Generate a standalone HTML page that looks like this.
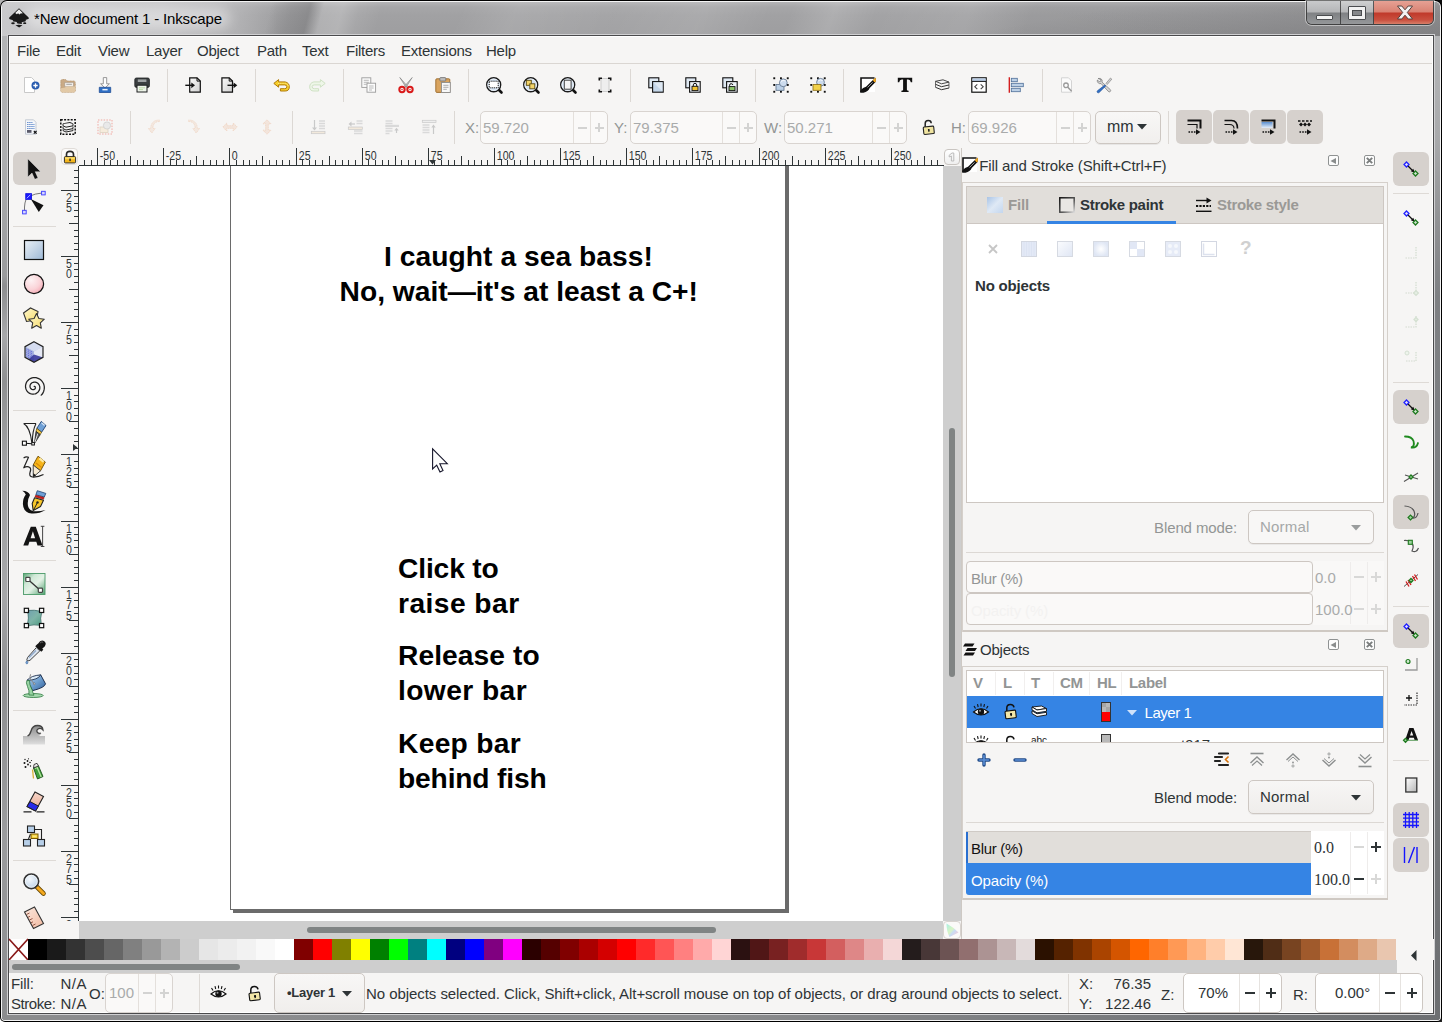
<!DOCTYPE html>
<html><head><meta charset="utf-8"><title>Inkscape</title>
<style>
*{box-sizing:border-box;margin:0;padding:0}
html,body{width:1442px;height:1022px;overflow:hidden;background:#fff}
body{font-family:"Liberation Sans",sans-serif;color:#2e3436;position:relative}
.a{position:absolute}
.t{position:absolute;white-space:nowrap;line-height:1}
svg{position:absolute;overflow:visible}
#content{position:absolute;left:9px;top:36px;width:1424px;height:977px;background:#f6f5f4;border:1px solid #fff}
</style></head><body>

<div class="a" style="left:0;top:0;width:8px;height:8px;background:#b4b4b4"></div><div class="a" style="left:1434px;top:0;width:8px;height:8px;background:#0a0a0a"></div><div class="a" style="left:1434px;top:1014px;width:8px;height:8px;background:#222"></div>
<div class="a" id="frame" style="left:0;top:0;width:1442px;height:1022px;background:#000;border-radius:7px 7px 5px 5px;overflow:hidden">
 <div class="a" style="left:1px;top:1px;width:1440px;height:1020px;background:#f4f4f4;border-radius:6px 6px 4px 4px;overflow:hidden">
  <div class="a" id="glass" style="left:1px;top:1px;width:1438px;height:1018px;border-radius:5px 5px 3px 3px;overflow:hidden;background:#9c9d9f">
   <!-- title gradient -->
   <div class="a" style="left:0;top:0;width:1438px;height:34px;background:linear-gradient(180deg,#b4b4b6 0,#a6a6a8 5px,#a1a1a3 14px,#9e9ea0 33px)"></div>
   <div class="a" style="left:0;top:0;width:1438px;height:34px;background:
    linear-gradient(90deg,rgba(215,215,217,.75) 0,rgba(210,210,212,.7) 160px,rgba(200,200,202,.45) 235px,rgba(200,200,202,0) 275px),
    linear-gradient(104deg,rgba(0,0,0,0) 262px,rgba(60,60,62,.14) 282px,rgba(50,50,52,.2) 300px,rgba(255,255,255,.18) 313px,rgba(255,255,255,.22) 332px,rgba(255,255,255,.08) 348px,rgba(255,255,255,0) 370px),
    linear-gradient(115deg,rgba(255,255,255,0) 420px,rgba(255,255,255,.1) 470px,rgba(255,255,255,.04) 560px,rgba(255,255,255,.1) 640px,rgba(255,255,255,0) 700px),
    linear-gradient(112deg,rgba(255,255,255,0) 735px,rgba(255,255,255,.14) 775px,rgba(255,255,255,.02) 815px,rgba(255,255,255,.08) 900px,rgba(0,0,0,.04) 960px,rgba(0,0,0,.05) 1250px,rgba(0,0,0,.04) 1438px),
    linear-gradient(170deg,rgba(0,0,0,0) 70%,rgba(30,30,32,.18) 100%)"></div>
   <!-- left glass -->
   <div class="a" style="left:0;top:34px;width:5px;height:984px;background:linear-gradient(180deg,#b3b4b6 0,#adaeb0 120px,#9a9b9d 240px,#8d8e90 250px,#a7a8aa 300px,#8f9092 345px,#9fa0a2 420px,#a6a7a9 560px,#8e8f91 640px,#9b9c9e 800px,#8b8c8e 984px)"></div>
   <!-- right glass -->
   <div class="a" style="left:1433px;top:34px;width:5px;height:984px;background:linear-gradient(180deg,#b5b6b8 0,#a9aaac 100px,#8d8e91 200px,#7e8083 260px,#7c7e82 500px,#737578 800px,#6d6f72 984px)"></div>
   <!-- bottom glass -->
   <div class="a" style="left:0;top:1013px;width:1438px;height:5px;background:linear-gradient(90deg,#8b8c8e 0,#8a8b8d 50%,#77797c 80%,#6d6f72 100%)"></div>
  </div>
  <!-- inner light + dark lines around content -->
  <div class="a" style="left:6px;top:33px;width:1428px;height:981px;border:1px solid #d0d0d2"></div>
  <div class="a" style="left:7px;top:34px;width:1426px;height:979px;border:1px solid #4a4a4c"></div>
 </div>
</div>
<!-- title glow + text -->
<div class="a" style="left:26px;top:7px;width:204px;height:22px;border-radius:11px;background:rgba(255,255,255,.38);filter:blur(6px)"></div>
<div class="t" style="left:34px;top:10.500px;font-size:15px;color:#000;letter-spacing:-.15px">*New document 1 - Inkscape</div>
<!-- inkscape logo -->
<svg style="left:8px;top:7px" width="22" height="22" viewBox="0 0 22 22">
  <path d="M11 1.2 L1.3 10.6 Q0.6 11.6 1.8 12.2 L5.2 13.2 Q3.8 14.2 5.6 14.6 L9 15.1 Q8.2 16.3 9.8 16.5 L13.6 16.9 Q14.8 16.2 13.4 15.3 L17.2 14.4 Q18.8 13.8 17.4 12.9 L20.2 12.1 Q21.4 11.5 20.6 10.5 Z" fill="#1a1a1a"/>
  <path d="M11 2.3 L7.2 6.1 L8.9 7.3 L10.1 6.2 L11.3 7.5 L12.6 6.4 L14.9 6.2 Z" fill="#f2f2f2"/>
  <ellipse cx="5" cy="16.3" rx="1.8" ry="1" fill="#1a1a1a"/>
  <ellipse cx="16.7" cy="16.2" rx="1.6" ry=".9" fill="#1a1a1a"/>
  <path d="M7.5 18.2 Q11 17.2 14.5 18.3 Q12.4 19.8 11.2 20.6 Q9.8 19.6 7.5 18.2Z" fill="#1a1a1a"/>
</svg>
<!-- caption buttons -->
<div class="a" style="left:1306px;top:1px;width:128px;height:24px;border-radius:0 0 6px 6px;border:1px solid rgba(40,40,40,.75);border-top:none;box-shadow:0 0 0 1px rgba(255,255,255,.45);overflow:hidden">
  <div class="a" style="left:0;top:0;width:34px;height:25px;background:linear-gradient(180deg,#c9cacc 0,#b4b5b7 11px,#7f8184 12px,#97999b 24px);border-right:1px solid rgba(40,40,40,.7)"></div>
  <div class="a" style="left:34px;top:0;width:33px;height:25px;background:linear-gradient(180deg,#cfd0d1 0,#b6b7b9 11px,#7f8184 12px,#989a9c 24px);border-right:1px solid rgba(40,40,40,.7)"></div>
  <div class="a" style="left:67px;top:0;width:60px;height:25px;background:linear-gradient(180deg,#e6a194 0,#d98273 11px,#c0392a 12px,#c9503f 19px,#dc8a72 24px)"></div>
</div>
<div class="a" style="left:1316px;top:15px;width:17px;height:5px;background:#f4f4f4;border:1px solid #4a4c4f;border-radius:1px"></div>
<div class="a" style="left:1348px;top:6px;width:18px;height:14px;background:#f1f1f1;border:1px solid #4a4c4f;border-radius:1px"></div>
<div class="a" style="left:1352px;top:10px;width:10px;height:6px;background:#85878a;border:1px solid #4a4c4f"></div>
<svg style="left:1396px;top:5px" width="18" height="15" viewBox="0 0 18 15"><path d="M1.5 1 L5.8 1 L9 4.8 L12.2 1 L16.5 1 L11.3 7.5 L16.5 14 L12.2 14 L9 10.2 L5.8 14 L1.5 14 L6.7 7.5 Z" fill="#f3f3f3" stroke="#54403c" stroke-width="1"/></svg>
<div id="content"></div>
<div class="t" style="left:17px;top:43px;font-size:15px;color:#2e3436;letter-spacing:-.25px">File</div><div class="t" style="left:56px;top:43px;font-size:15px;color:#2e3436;letter-spacing:-.25px">Edit</div><div class="t" style="left:98px;top:43px;font-size:15px;color:#2e3436;letter-spacing:-.25px">View</div><div class="t" style="left:146px;top:43px;font-size:15px;color:#2e3436;letter-spacing:-.25px">Layer</div><div class="t" style="left:197px;top:43px;font-size:15px;color:#2e3436;letter-spacing:-.25px">Object</div><div class="t" style="left:257px;top:43px;font-size:15px;color:#2e3436;letter-spacing:-.25px">Path</div><div class="t" style="left:302px;top:43px;font-size:15px;color:#2e3436;letter-spacing:-.25px">Text</div><div class="t" style="left:346px;top:43px;font-size:15px;color:#2e3436;letter-spacing:-.25px">Filters</div><div class="t" style="left:401px;top:43px;font-size:15px;color:#2e3436;letter-spacing:-.25px">Extensions</div><div class="t" style="left:486px;top:43px;font-size:15px;color:#2e3436;letter-spacing:-.25px">Help</div><div class="a" style="left:10px;top:63px;width:1422px;height:1px;background:#dad6d2"></div><svg style="left:24.0px;top:77.0px" width="16" height="16" viewBox="0 0 16 16"><path d="M.5 .5h7l3 3v12h-10z" fill="#fff" stroke="#c9c9c9"/><circle cx="11.5" cy="8.5" r="4" fill="#2a5db0"/><path d="M9.3 8.5h4.4M11.5 6.3v4.4" stroke="#fff" stroke-width="1.3"/></svg><svg style="left:60.0px;top:77.0px" width="16" height="16" viewBox="0 0 16 16"><path d="M.8 4.200q0-1.700 1.600-1.700h3.300l1.300 1.500h6.800q1.500 0 1.500 1.500v8.300q0 1.400-1.500 1.400H2.300q-1.500 0-1.500-1.400z" fill="#c9aa86" stroke="#b4936c" stroke-width=".8" stroke-dasharray="1 .5"/><rect x="4.800" y="5.400" width="8.600" height="4.400" fill="#f1ede8" stroke="#a99b8a" stroke-width=".6"/><path d="M6.300 7.300h5.600" stroke="#9a9a9a" stroke-width=".9"/><path d="M.8 11.200q4-.2 6-1.700h8.500v4.300q0 1.400-1.500 1.400H2.300q-1.500 0-1.500-1.400z" fill="#e2c9a6"/></svg><svg style="left:97.0px;top:77.0px" width="16" height="16" viewBox="0 0 16 16"><path d="M6.300.600h3.400v6.200h2.700L8 11 3.600 6.800h2.700z" fill="#fdfdfd" stroke="#8c8c8c" stroke-width=".9" stroke-linejoin="round"/><path d="M2.300 10.300h11.400v5.200H2.300z" fill="#2f6fc4" stroke="#1f4e96" stroke-width=".8"/><rect x="5.400" y="11.900" width="5.200" height="1.500" fill="#e8f0fa"/></svg><svg style="left:134.0px;top:77.0px" width="16" height="16" viewBox="0 0 16 16"><rect x=".8" y="1" width="14.6" height="9.4" rx="1.6" fill="#3b3f41" stroke="#1c1e1f" stroke-width=".8"/><rect x="3.8" y="2.4" width="8.6" height="2.6" fill="#9ea2a3"/><rect x="3" y="8.2" width="10" height="6.8" fill="#eef3ea" stroke="#1c1e1f" stroke-width="1"/><path d="M5 10.8h6M5 12.6h4" stroke="#b7d8a0" stroke-width=".9"/></svg><svg style="left:185.0px;top:77.0px" width="16" height="16" viewBox="0 0 16 16"><defs><linearGradient id="gi" x1="0" y1="0" x2="1" y2="1"><stop offset="0" stop-color="#fafafa"/><stop offset="1" stop-color="#d0d0d0"/></linearGradient></defs><path d="M4.700.800h7.300l3.300 3.300v11.100H4.700z" fill="url(#gi)" stroke="#111" stroke-width="1.200"/><path d="M12 .800v3.300h3.300" fill="none" stroke="#111" stroke-width="1"/><path d="M.3 8.300h7" stroke="#111" stroke-width="1.400"/><path d="M6.300 5.400L10 8.300 6.300 11.200z" fill="#111"/></svg><svg style="left:221.0px;top:77.0px" width="16" height="16" viewBox="0 0 16 16"><defs><linearGradient id="ge2" x1="0" y1="0" x2="1" y2="1"><stop offset="0" stop-color="#fafafa"/><stop offset="1" stop-color="#d0d0d0"/></linearGradient></defs><path d="M.900.800h7.300l3.300 3.300v11.100H.900z" fill="url(#ge2)" stroke="#111" stroke-width="1.200"/><path d="M8.200.800v3.300h3.300" fill="none" stroke="#111" stroke-width="1"/><path d="M6.500 8.300h7" stroke="#111" stroke-width="1.400"/><path d="M12.600 5.400L16.300 8.300 12.600 11.200z" fill="#111"/></svg><svg style="left:273.0px;top:77.0px" width="16" height="16" viewBox="0 0 16 16"><path d="M5.600 2.600L.800 6.400l4.800 3.800V7.900h6.100q2.200 0 2.200 1.900t-2.200 1.900H7.400v2.300h4.700q4.200 0 4.200-4.100T12.100 4.900H5.600z" fill="#f8cf2a" stroke="#b07a08" stroke-width="1" stroke-linejoin="round"/><path d="M5 6.400h7.500q2.800.3 2.800 3.400" fill="none" stroke="#fff2a8" stroke-width=".8" stroke-dasharray="1 .8"/></svg><svg style="left:310.0px;top:77.0px" width="16" height="16" viewBox="0 0 16 16"><path d="M10.400 2.600l4.800 3.800-4.800 3.800V7.900H4.300q-2.200 0-2.200 1.900t2.200 1.900h4.300v2.300H3.900q-4.200 0-4.200-4.100T3.900 4.900h6.500z" fill="#eef6e8" stroke="#cfe2c4" stroke-width="1" stroke-linejoin="round"/></svg><svg style="left:360.0px;top:77.0px" width="16" height="16" viewBox="0 0 16 16"><rect x="1.800" y=".8" width="9" height="9.600" fill="#fafafa" stroke="#9c9c9c" stroke-width=".9"/><path d="M3.800 3.300h5M3.800 5.300h5M3.800 7.300h3" stroke="#aaa" stroke-width=".8"/><rect x="7" y="6.200" width="8.600" height="9" fill="#fcfcfc" stroke="#9c9c9c" stroke-width=".9"/><path d="M9 9h4.600M9 11h4.600M9 13h3" stroke="#aaa" stroke-width=".8"/></svg><svg style="left:398.0px;top:77.0px" width="16" height="16" viewBox="0 0 16 16"><path d="M1.800.500L9.400 9.200 8 10.300zM14.200.500L6.600 9.200 8 10.300z" fill="#c8c8c8" stroke="#7a7a7a" stroke-width=".6"/><circle cx="4" cy="12.500" r="2.700" fill="none" stroke="#d91a1a" stroke-width="2"/><circle cx="12" cy="12.500" r="2.700" fill="none" stroke="#d91a1a" stroke-width="2"/><circle cx="4" cy="12.500" r=".7" fill="#d91a1a"/><circle cx="12" cy="12.500" r=".7" fill="#d91a1a"/></svg><svg style="left:435.0px;top:77.0px" width="16" height="16" viewBox="0 0 16 16"><rect x=".8" y="1.800" width="14" height="13.600" rx="1" fill="#d9a45f" stroke="#9a6a2a" stroke-width=".9"/><rect x="4.800" y=".6" width="6" height="3.400" rx=".8" fill="#bdbdbd" stroke="#6f6f6f" stroke-width=".8"/><rect x="6.500" y="5.500" width="8.800" height="10" fill="#f8f8f8" stroke="#8d8d8d" stroke-width=".9"/><path d="M8.300 8.300h5.200M8.300 10.300h5.200M8.300 12.300h3.500" stroke="#9a9a9a" stroke-width=".8"/></svg><svg style="left:486.0px;top:77.0px" width="16" height="16" viewBox="0 0 16 16"><path d="M12.500 12.500l3 3" stroke="#111" stroke-width="2.600" stroke-linecap="round"/><circle cx="7.700" cy="7.700" r="7" fill="#d5e3f2" stroke="#1a1a1a" stroke-width="1.400"/><circle cx="7.700" cy="7.700" r="5.800" fill="none" stroke="#f2f6fb" stroke-width=".8"/><rect x="3.200" y="4.200" width="9" height="6.600" fill="#fff" stroke="#111" stroke-width="1" stroke-dasharray="1.200 .9"/></svg><svg style="left:523.0px;top:77.0px" width="16" height="16" viewBox="0 0 16 16"><path d="M12.500 12.500l3 3" stroke="#111" stroke-width="2.600" stroke-linecap="round"/><circle cx="7.700" cy="7.700" r="7" fill="#d5e3f2" stroke="#1a1a1a" stroke-width="1.400"/><circle cx="7.700" cy="7.700" r="5.800" fill="none" stroke="#f2f6fb" stroke-width=".8"/><rect x="3.300" y="3.300" width="5" height="5" fill="#f3d46a" stroke="#5a4a10" stroke-width=".9"/><rect x="6.800" y="6.800" width="5" height="5" fill="#f3d46a" stroke="#5a4a10" stroke-width=".9"/></svg><svg style="left:560.0px;top:77.0px" width="16" height="16" viewBox="0 0 16 16"><path d="M12.500 12.500l3 3" stroke="#111" stroke-width="2.600" stroke-linecap="round"/><circle cx="7.700" cy="7.700" r="7" fill="#d5e3f2" stroke="#1a1a1a" stroke-width="1.400"/><circle cx="7.700" cy="7.700" r="5.800" fill="none" stroke="#f2f6fb" stroke-width=".8"/><rect x="4.300" y="3.200" width="6.800" height="9" fill="#f4f4f4" stroke="#444" stroke-width="1"/></svg><svg style="left:597.0px;top:77.0px" width="16" height="16" viewBox="0 0 16 16"><rect x="4" y="1.500" width="8" height="13" fill="#eeeeee" stroke="#c4c4c4" stroke-width=".8"/><path d="M2.300 3.500V1.300h2.700M11 1.300h2.700V3.500M13.700 12.500v2.200H11M5 14.700H2.300V12.500" fill="none" stroke="#111" stroke-width="1.600"/></svg><svg style="left:648.0px;top:77.0px" width="16" height="16" viewBox="0 0 16 16"><rect x=".8" y=".8" width="10" height="10" fill="#dfe9f3" stroke="#111" stroke-width="1.100"/><rect x="4.600" y="4.600" width="10.600" height="10.600" fill="#c5d7ea" stroke="#111" stroke-width="1.100"/><path d="M5.200 5.200h9.400v9.400z" fill="#e8eff7" opacity=".7"/></svg><svg style="left:685.0px;top:77.0px" width="16" height="16" viewBox="0 0 16 16"><rect x=".8" y=".8" width="10" height="10" fill="#dfe9f3" stroke="#111" stroke-width="1.100"/><rect x="4.600" y="4.600" width="10.600" height="10.600" fill="#eef3f8" stroke="#111" stroke-width="1.100"/><rect x="7" y="9.300" width="6" height="4.300" fill="#f2c230" stroke="#111" stroke-width=".9"/><path d="M8.300 9.300V7.900q0-1.500 1.700-1.500t1.700 1.500v1.400" fill="none" stroke="#111" stroke-width="1"/></svg><svg style="left:722.0px;top:77.0px" width="16" height="16" viewBox="0 0 16 16"><rect x=".8" y=".8" width="10" height="10" fill="#dfe9f3" stroke="#111" stroke-width="1.100"/><rect x="4.600" y="4.600" width="10.600" height="10.600" fill="#eef3f8" stroke="#111" stroke-width="1.100"/><rect x="7" y="9.600" width="6" height="4" fill="#8cc56a" stroke="#111" stroke-width=".9"/><path d="M7.600 9.600V8.200q0-1.500 1.600-1.500t1.600 1.300" fill="none" stroke="#111" stroke-width="1"/></svg><svg style="left:773.0px;top:77.0px" width="16" height="16" viewBox="0 0 16 16"><rect x="0.3" y="0.3" width="1.900" height="1.900" fill="#111"/><rect x="13.8" y="0.3" width="1.900" height="1.900" fill="#111"/><rect x="0.3" y="13.8" width="1.900" height="1.900" fill="#111"/><rect x="13.8" y="13.8" width="1.900" height="1.900" fill="#111"/><rect x="7" y="0.3" width="1.900" height="1.900" fill="#111"/><rect x="7" y="13.8" width="1.900" height="1.900" fill="#111"/><rect x="0.3" y="7" width="1.900" height="1.900" fill="#111"/><rect x="13.8" y="7" width="1.900" height="1.900" fill="#111"/><rect x="3" y="7.500" width="8" height="5.800" fill="#bcd0e6" stroke="#5a6f88" stroke-width=".8"/><circle cx="10.300" cy="5.800" r="3.900" fill="#cddcee" stroke="#5a6f88" stroke-width=".8"/><path d="M8 4.500q2-2 4.500-.5" fill="none" stroke="#fff" stroke-width=".8"/></svg><svg style="left:810.0px;top:77.0px" width="16" height="16" viewBox="0 0 16 16"><rect x="0.3" y="0.3" width="1.900" height="1.900" fill="#111"/><rect x="13.8" y="0.3" width="1.900" height="1.900" fill="#111"/><rect x="0.3" y="13.8" width="1.900" height="1.900" fill="#111"/><rect x="13.8" y="13.8" width="1.900" height="1.900" fill="#111"/><rect x="7" y="0.3" width="1.900" height="1.900" fill="#111"/><rect x="7" y="13.8" width="1.900" height="1.900" fill="#111"/><rect x="0.3" y="7" width="1.900" height="1.900" fill="#111"/><rect x="13.8" y="7" width="1.900" height="1.900" fill="#111"/><circle cx="10.500" cy="5.300" r="3.900" fill="#cddcee" stroke="#5a6f88" stroke-width=".8"/><rect x="3" y="7.500" width="8" height="5.800" fill="#f2d24a" stroke="#8a6a10" stroke-width=".8"/><path d="M8.200 4q2-2 4.500-.5" fill="none" stroke="#fff" stroke-width=".8"/></svg><svg style="left:860.0px;top:77.0px" width="16" height="16" viewBox="0 0 16 16"><path d="M1 1h14v14H1z" fill="#fff"/><path d="M.2 1h14.300M1 .3v14.700" stroke="#111" stroke-width="1.600"/><path d="M.2 15.700V13.800Q3 10.300 6 9.800L12.400 3.400 15.900.700 15.600 5 9.700 11Q8.200 14.600 3.500 15.700z" fill="#111"/><path d="M7.500 10.500L12.600 5.400" stroke="#999" stroke-width="1"/><path d="M12.800 3.100L15.900.600 15.700 5.100 14.300 5.300z" fill="#f5a81c"/></svg><svg style="left:897.0px;top:77.0px" width="16" height="16" viewBox="0 0 16 16"><path d="M.8.800h14.400v4.400h-1.400q-.3-2.400-2.600-2.600H9.900v10.200q0 1 1.700 1v1.200H4.400v-1.200q1.700 0 1.700-1V2.600H4.800Q2.500 2.800 2.200 5.200H.8z" fill="#111"/></svg><svg style="left:934.0px;top:77.0px" width="16" height="16" viewBox="0 0 16 16"><path d="M1.500 4.300L9 2.800l6 2.300-7.500 1.700z" fill="#f4f4f4" stroke="#333" stroke-width=".9"/><path d="M1.500 7.300l6 2.400 7.500-1.700M1.500 10.300l6 2.400 7.500-1.700" fill="none" stroke="#333" stroke-width="1"/><path d="M1.500 4.300v6M15 5.100v6" stroke="#333" stroke-width=".7"/></svg><svg style="left:971.0px;top:77.0px" width="16" height="16" viewBox="0 0 16 16"><rect x=".8" y=".8" width="14.400" height="14.400" fill="#fff" stroke="#111" stroke-width="1.200"/><rect x="1.400" y="1.400" width="13.200" height="2.800" fill="#b9cde6"/><path d="M1 4.400h14" stroke="#111" stroke-width="1"/><path d="M6.300 7.300L3.800 9.700l2.500 2.400M9.700 7.300l2.500 2.400-2.500 2.400" fill="none" stroke="#444" stroke-width="1.100"/></svg><svg style="left:1008.0px;top:77.0px" width="16" height="16" viewBox="0 0 16 16"><path d="M1.300.3v15.400" stroke="#d21313" stroke-width="1.300"/><rect x="3.300" y="1.300" width="6" height="3.400" fill="#bcd0e6" stroke="#4f6f99" stroke-width=".8"/><rect x="3.300" y="6.300" width="12" height="3.400" fill="#bcd0e6" stroke="#4f6f99" stroke-width=".8"/><rect x="3.300" y="11.300" width="9" height="3.400" fill="#bcd0e6" stroke="#4f6f99" stroke-width=".8"/></svg><svg style="left:1059.0px;top:77.0px" width="16" height="16" viewBox="0 0 16 16"><path d="M2.500.800h7l3 3v11.400h-10z" fill="#fbfbfb" stroke="#cfcfcf" stroke-width=".9"/><circle cx="7" cy="8.300" r="2.300" fill="none" stroke="#9a9a9a" stroke-width="1.300"/><path d="M8.600 10l4 4.200" stroke="#9a9a9a" stroke-width="1.500"/></svg><svg style="left:1096.0px;top:77.0px" width="16" height="16" viewBox="0 0 16 16"><path d="M2 1.500q2.800-.8 4 1.300.5 1.200-.1 2.200l8.400 7.600q.9 1.100-.1 2-1 .8-1.900-.2L5 6.500q-1.400.5-2.600-.4Q.900 4.800 1.300 3l1.900 1.600 1.500-.4.300-1.500z" fill="#d5d5d5" stroke="#777" stroke-width=".7"/><path d="M14.500 1L10 6.300l1.200 1.200 4.600-5.300z" fill="#cfcfcf" stroke="#777" stroke-width=".6"/><path d="M8.800 8L1.400 13.800q-.8 1 .1 1.800.9.600 1.700-.2L9.800 9z" fill="#2f6fc4" stroke="#1f4e96" stroke-width=".6"/></svg><div class="a" style="left:167px;top:69px;width:1px;height:33px;background:#dcd8d4"></div><div class="a" style="left:255px;top:69px;width:1px;height:33px;background:#dcd8d4"></div><div class="a" style="left:343px;top:69px;width:1px;height:33px;background:#dcd8d4"></div><div class="a" style="left:468px;top:69px;width:1px;height:33px;background:#dcd8d4"></div><div class="a" style="left:630px;top:69px;width:1px;height:33px;background:#dcd8d4"></div><div class="a" style="left:755px;top:69px;width:1px;height:33px;background:#dcd8d4"></div><div class="a" style="left:843px;top:69px;width:1px;height:33px;background:#dcd8d4"></div><div class="a" style="left:1042px;top:69px;width:1px;height:33px;background:#dcd8d4"></div><svg style="left:24.0px;top:119.0px" width="16" height="16" viewBox="0 0 16 16"><path d="M1.500 .8h8l2.500 2.500V15.200H1.500z" fill="#f4f6fa" stroke="#b9c0cc" stroke-width=".8"/><path d="M3 3.500h5.500M3 5.500h7.500M3 7.500h7.500M3 9.500h7.500" stroke="#6f95d0" stroke-width="1.200" stroke-dasharray="1.600 .5"/><rect x="3" y="11" width="4.500" height="2.800" fill="#5a5a6a"/><path d="M9.800 11.800l2.800 2.800M12.600 11.800l-2.800 2.800" stroke="#111" stroke-width="1.200"/></svg><svg style="left:60.0px;top:119.0px" width="16" height="16" viewBox="0 0 16 16"><rect x=".8" y=".8" width="14.400" height="14.400" fill="none" stroke="#111" stroke-width="1.500" stroke-dasharray="2 1.300"/><path d="M3 4.800L10 3.500l3 1.300-7 1.400z" fill="#f4f4f4" stroke="#222" stroke-width="1"/><path d="M3 4.800v2l3 1.400 7-1.400v-2M3 7.600v2l3 1.400 7-1.400v-2M3 10.400v1.200l3 1.400 7-1.400v-1.200" fill="#f4f4f4" stroke="#222" stroke-width="1"/></svg><svg style="left:97.0px;top:119.0px" width="16" height="16" viewBox="0 0 16 16"><rect x="1" y="1" width="14" height="14" fill="none" stroke="#f0a8a0" stroke-width="1" stroke-dasharray="1.500 1.300"/><rect x="3" y="8" width="8" height="5.500" fill="#f6ecdc" stroke="#ddd2c0" stroke-width=".8"/><circle cx="10" cy="6.500" r="3.600" fill="#e9e9e9" stroke="#cfcfcf" stroke-width=".8"/></svg><svg style="left:147.0px;top:119.0px" width="16" height="16" viewBox="0 0 16 16"><path d="M12.500 2.500Q6 2.500 5.800 9.500h2.400L4.800 14 1.400 9.500h2.200Q4 1 12.500 1z" fill="#f0d5c3" stroke="#f0d5c3" stroke-width=".8" stroke-dasharray="1.400 .8" fill-opacity=".4"/></svg><svg style="left:185.0px;top:119.0px" width="16" height="16" viewBox="0 0 16 16"><path d="M3.500 2.500Q10 2.500 10.200 9.500H7.800L11.200 14l3.400-4.500h-2.200Q12 1 3.500 1z" fill="#f0d5c3" stroke="#f0d5c3" stroke-width=".8" stroke-dasharray="1.400 .8" fill-opacity=".4"/></svg><svg style="left:222.0px;top:119.0px" width="16" height="16" viewBox="0 0 16 16"><path d="M.8 8l4-4v2.700h6.400V4l4 4-4 4V9.300H4.800V12z" fill="#f0d5c3" fill-opacity=".5" stroke="#f0d5c3" stroke-width=".9" stroke-dasharray="1.400 .8"/></svg><svg style="left:259.0px;top:119.0px" width="16" height="16" viewBox="0 0 16 16"><path d="M8 .8l4 4H9.300v6.400H12l-4 4-4-4h2.700V4.800H4z" fill="#f0d5c3" fill-opacity=".5" stroke="#f0d5c3" stroke-width=".9" stroke-dasharray="1.400 .8"/></svg><svg style="left:310.0px;top:119.0px" width="16" height="16" viewBox="0 0 16 16"><path d="M4.500 1v9" stroke="#c9c9c9" stroke-width="1.200"/><path d="M2 8.500l2.500 3 2.500-3z" fill="#c9c9c9"/><path d="M9 2h6M9 4.500h6M9 7h6M9 9.500h6" stroke="#d9d9d9" stroke-width="1.400"/><rect x="1.300" y="12.300" width="13.700" height="2.400" fill="#f2e9dc" stroke="#c9c9c9" stroke-width=".7"/></svg><svg style="left:347.0px;top:119.0px" width="16" height="16" viewBox="0 0 16 16"><path d="M3 5h5" stroke="#c9c9c9" stroke-width="1.200"/><path d="M4.500 2.500L1.500 5l3 2.500z" fill="#c9c9c9"/><path d="M9.500 2h6M9.500 4.500h6M7 12h8.500M7 14.500h8.500" stroke="#d9d9d9" stroke-width="1.400"/><rect x="1.300" y="8" width="14" height="2.400" fill="#f2e9dc" stroke="#c9c9c9" stroke-width=".7"/></svg><svg style="left:384.0px;top:119.0px" width="16" height="16" viewBox="0 0 16 16"><path d="M1.500 2h7M1.500 4.500h7M1.500 9.500h7M1.500 12h7M1.500 14.500h4" stroke="#d9d9d9" stroke-width="1.400"/><rect x="1.300" y="5.800" width="13.700" height="2.200" fill="#d9d9d9"/><path d="M12.500 14v-4" stroke="#c9c9c9" stroke-width="1.200"/><path d="M10.300 11.500l2.200-2.800 2.200 2.800z" fill="#c9c9c9"/></svg><svg style="left:421.0px;top:119.0px" width="16" height="16" viewBox="0 0 16 16"><rect x="1.300" y="1.300" width="13.700" height="2.200" fill="#eee" stroke="#c9c9c9" stroke-width=".7"/><path d="M1.500 6h7M1.500 8.500h7M1.500 11h7M1.500 13.500h7" stroke="#d9d9d9" stroke-width="1.400"/><path d="M12.500 15V7" stroke="#c9c9c9" stroke-width="1.200"/><path d="M10.300 8.500l2.200-3 2.200 3z" fill="#c9c9c9"/></svg><div class="a" style="left:130px;top:111px;width:1px;height:33px;background:#dcd8d4"></div><div class="a" style="left:292px;top:111px;width:1px;height:33px;background:#dcd8d4"></div><div class="a" style="left:454px;top:111px;width:1px;height:33px;background:#dcd8d4"></div><div class="a" style="left:1168px;top:111px;width:1px;height:33px;background:#dcd8d4"></div><div class="t" style="left:465px;top:120px;font-size:15px;color:#929595;">X:</div><div class="a" style="left:480px;top:111px;width:128px;height:33px;background:#faf9f8;border:1px solid #d9d4d0;border-radius:5px"></div><div class="a" style="left:573px;top:112px;width:1px;height:31px;background:#e4e0dc"></div><div class="a" style="left:590px;top:112px;width:1px;height:31px;background:#e4e0dc"></div><div class="a" style="left:577.5px;top:126.5px;width:9px;height:2px;background:#d3d3d2"></div><div class="a" style="left:594.5px;top:126.5px;width:9px;height:2px;background:#d3d3d2"></div><div class="a" style="left:598.0px;top:123.0px;width:2px;height:9px;background:#d3d3d2"></div><div class="t" style="left:483px;top:119.5px;font-size:15px;color:#a9abab">59.720</div><div class="t" style="left:614px;top:120px;font-size:15px;color:#929595;">Y:</div><div class="a" style="left:630px;top:111px;width:127px;height:33px;background:#faf9f8;border:1px solid #d9d4d0;border-radius:5px"></div><div class="a" style="left:722px;top:112px;width:1px;height:31px;background:#e4e0dc"></div><div class="a" style="left:739px;top:112px;width:1px;height:31px;background:#e4e0dc"></div><div class="a" style="left:726.5px;top:126.5px;width:9px;height:2px;background:#d3d3d2"></div><div class="a" style="left:743.5px;top:126.5px;width:9px;height:2px;background:#d3d3d2"></div><div class="a" style="left:747.0px;top:123.0px;width:2px;height:9px;background:#d3d3d2"></div><div class="t" style="left:633px;top:119.5px;font-size:15px;color:#a9abab">79.375</div><div class="t" style="left:764px;top:120px;font-size:15px;color:#929595;">W:</div><div class="a" style="left:784px;top:111px;width:123px;height:33px;background:#faf9f8;border:1px solid #d9d4d0;border-radius:5px"></div><div class="a" style="left:872px;top:112px;width:1px;height:31px;background:#e4e0dc"></div><div class="a" style="left:889px;top:112px;width:1px;height:31px;background:#e4e0dc"></div><div class="a" style="left:876.5px;top:126.5px;width:9px;height:2px;background:#d3d3d2"></div><div class="a" style="left:893.5px;top:126.5px;width:9px;height:2px;background:#d3d3d2"></div><div class="a" style="left:897.0px;top:123.0px;width:2px;height:9px;background:#d3d3d2"></div><div class="t" style="left:787px;top:119.5px;font-size:15px;color:#a9abab">50.271</div><div class="t" style="left:951px;top:120px;font-size:15px;color:#929595;">H:</div><div class="a" style="left:968px;top:111px;width:123px;height:33px;background:#faf9f8;border:1px solid #d9d4d0;border-radius:5px"></div><div class="a" style="left:1056px;top:112px;width:1px;height:31px;background:#e4e0dc"></div><div class="a" style="left:1073px;top:112px;width:1px;height:31px;background:#e4e0dc"></div><div class="a" style="left:1060.5px;top:126.5px;width:9px;height:2px;background:#d3d3d2"></div><div class="a" style="left:1077.5px;top:126.5px;width:9px;height:2px;background:#d3d3d2"></div><div class="a" style="left:1081.0px;top:123.0px;width:2px;height:9px;background:#d3d3d2"></div><div class="t" style="left:971px;top:119.5px;font-size:15px;color:#a9abab">69.926</div><svg style="left:921.0px;top:119.0px" width="16" height="16" viewBox="0 0 16 16"><path d="M4.200 8V4.600q0-3 3-3t3 2.600" fill="none" stroke="#222" stroke-width="1.500"/><rect x="2.500" y="7.500" width="10.500" height="7.500" rx="1" fill="#f0e4a0" stroke="#222" stroke-width="1.100" transform="rotate(-6 8 11)"/><rect x="7" y="10" width="1.600" height="2.600" fill="#222" transform="rotate(-6 8 11)"/></svg><div class="a" style="left:1095px;top:111px;width:66px;height:33px;background:linear-gradient(180deg,#f8f7f6,#f1efed);border:1px solid #cdc7c2;border-radius:5px;box-shadow:0 1px 0 rgba(0,0,0,.06)"></div><div class="t" style="left:1107px;top:119px;font-size:16px;color:#2e3436;">mm</div><svg style="left:1137px;top:124px" width="10" height="6" viewBox="0 0 10 6"><path d="M0 0h10L5 5.500z" fill="#2e3436"/></svg><div class="a" style="left:1176px;top:110px;width:36px;height:34px;background:#d6d1cd;border-radius:5px"></div><svg style="left:1186.0px;top:119.0px" width="16" height="16" viewBox="0 0 16 16"><path d="M1.500 1.500h13v8" fill="none" stroke="#111" stroke-width="2"/><path d="M1.500 5.500h9.500v4" fill="none" stroke="#111" stroke-width="1.200"/><path d="M2.500 13h8" stroke="#111" stroke-width="1.300" stroke-dasharray="1.600 1.100"/><path d="M10 10.200l4.500 2.800-4.500 2.800z" fill="#111"/></svg><div class="a" style="left:1213px;top:110px;width:36px;height:34px;background:#d6d1cd;border-radius:5px"></div><svg style="left:1223.0px;top:119.0px" width="16" height="16" viewBox="0 0 16 16"><path d="M1.500 1.500h7q6 0 6 8" fill="none" stroke="#111" stroke-width="1.600"/><path d="M1.500 5.500h5q4.500 0 4.500 4" fill="none" stroke="#111" stroke-width="1.100"/><path d="M2.500 13h8" stroke="#111" stroke-width="1.300" stroke-dasharray="1.600 1.100"/><path d="M10 10.200l4.500 2.800-4.500 2.800z" fill="#111"/></svg><div class="a" style="left:1250px;top:110px;width:36px;height:34px;background:#d6d1cd;border-radius:5px"></div><svg style="left:1260.0px;top:119.0px" width="16" height="16" viewBox="0 0 16 16"><defs><linearGradient id="tg2" x1="0" y1="0" x2="0" y2="1"><stop offset="0" stop-color="#5b8fd0"/><stop offset="1" stop-color="#e6eef8"/></linearGradient></defs><path d="M1.500 3h11v6h-11z" fill="url(#tg2)"/><path d="M1.500 1.500h13v8" fill="none" stroke="#111" stroke-width="2"/><path d="M2.500 13h8" stroke="#111" stroke-width="1.300" stroke-dasharray="1.600 1.100"/><path d="M10 10.200l4.500 2.800-4.500 2.800z" fill="#111"/></svg><div class="a" style="left:1287px;top:110px;width:36px;height:34px;background:#d6d1cd;border-radius:5px"></div><svg style="left:1297.0px;top:119.0px" width="16" height="16" viewBox="0 0 16 16"><path d="M1 2h14" stroke="#111" stroke-width="1.400" stroke-dasharray="2.500 1.500"/><path d="M2 5.500l2-2 2 2-2 2zM6 5.500l2-2 2 2-2 2zM10 5.500l2-2 2 2-2 2z" fill="#111"/><path d="M2.500 13h8" stroke="#111" stroke-width="1.300" stroke-dasharray="1.600 1.100"/><path d="M10 10.200l4.500 2.800-4.500 2.800z" fill="#111"/></svg><div class="a" style="left:79px;top:166px;width:864px;height:755px;background:#fff"></div><div class="a" style="left:230px;top:166px;width:1px;height:744px;background:#6a6a6a"></div><div class="a" style="left:785px;top:166px;width:4px;height:747px;background:#6b6b6b"></div><div class="a" style="left:230px;top:909px;width:559px;height:4px;background:#6b6b6b"></div><div class="a" style="left:230px;top:910px;width:3px;height:3px;background:#fff"></div><div class="t" style="left:218.500px;width:600px;text-align:center;top:241.800px;letter-spacing:.05px;font-weight:bold;color:#000;font-size:28.200px;">I caught a sea bass!</div><div class="t" style="left:218.800px;width:600px;text-align:center;top:276.800px;font-weight:bold;color:#000;font-size:28.200px;">No, wait—it's at least a C+!</div><div class="t" style="left:398px;top:554px;font-weight:bold;color:#000;font-size:28.200px;letter-spacing:-0.14px">Click to</div><div class="t" style="left:398px;top:589px;font-weight:bold;color:#000;font-size:28.200px;letter-spacing:0.45px">raise bar</div><div class="t" style="left:398px;top:641px;font-weight:bold;color:#000;font-size:28.200px;letter-spacing:0.08px">Release to</div><div class="t" style="left:398px;top:676px;font-weight:bold;color:#000;font-size:28.200px;letter-spacing:0.41px">lower bar</div><div class="t" style="left:398px;top:729px;font-weight:bold;color:#000;font-size:28.200px;letter-spacing:0.3px">Keep bar</div><div class="t" style="left:398px;top:764px;font-weight:bold;color:#000;font-size:28.200px;letter-spacing:-0.16px">behind fish</div><svg style="left:431.500px;top:447.500px" width="17" height="25" viewBox="0 0 17 25"><path d="M.6.800V21L4.700 17.200 8 24 11 22.600 7.800 15.700H15.300Z" fill="#fdfdfd" stroke="#15152a" stroke-width="1.100"/></svg><div class="a" style="left:61px;top:148px;width:883px;height:18px;background:#f6f5f4"></div><svg style="left:0;top:0;overflow:hidden" width="944" height="921" fill="#2e3436" font-family="Liberation Sans" font-size="12.300"><rect x="84" y="160" width="1" height="5"/><rect x="91" y="160" width="1" height="5"/><rect x="97" y="148" width="1" height="17"/><text transform="translate(99.8,159.600) scale(.86,1)">-50</text><rect x="104" y="160" width="1" height="5"/><rect x="110" y="160" width="1" height="5"/><rect x="117" y="160" width="1" height="5"/><rect x="124" y="160" width="1" height="5"/><rect x="130" y="156" width="1" height="9"/><rect x="137" y="160" width="1" height="5"/><rect x="143" y="160" width="1" height="5"/><rect x="150" y="160" width="1" height="5"/><rect x="157" y="160" width="1" height="5"/><rect x="163" y="148" width="1" height="17"/><text transform="translate(165.8,159.600) scale(.86,1)">-25</text><rect x="170" y="160" width="1" height="5"/><rect x="176" y="160" width="1" height="5"/><rect x="183" y="160" width="1" height="5"/><rect x="190" y="160" width="1" height="5"/><rect x="196" y="156" width="1" height="9"/><rect x="203" y="160" width="1" height="5"/><rect x="210" y="160" width="1" height="5"/><rect x="216" y="160" width="1" height="5"/><rect x="223" y="160" width="1" height="5"/><rect x="229" y="148" width="1" height="17"/><text transform="translate(231.8,159.600) scale(.86,1)">0</text><rect x="236" y="160" width="1" height="5"/><rect x="243" y="160" width="1" height="5"/><rect x="249" y="160" width="1" height="5"/><rect x="256" y="160" width="1" height="5"/><rect x="262" y="156" width="1" height="9"/><rect x="269" y="160" width="1" height="5"/><rect x="276" y="160" width="1" height="5"/><rect x="282" y="160" width="1" height="5"/><rect x="289" y="160" width="1" height="5"/><rect x="296" y="148" width="1" height="17"/><text transform="translate(298.8,159.600) scale(.86,1)">25</text><rect x="302" y="160" width="1" height="5"/><rect x="309" y="160" width="1" height="5"/><rect x="315" y="160" width="1" height="5"/><rect x="322" y="160" width="1" height="5"/><rect x="329" y="156" width="1" height="9"/><rect x="335" y="160" width="1" height="5"/><rect x="342" y="160" width="1" height="5"/><rect x="348" y="160" width="1" height="5"/><rect x="355" y="160" width="1" height="5"/><rect x="362" y="148" width="1" height="17"/><text transform="translate(364.8,159.600) scale(.86,1)">50</text><rect x="368" y="160" width="1" height="5"/><rect x="375" y="160" width="1" height="5"/><rect x="382" y="160" width="1" height="5"/><rect x="388" y="160" width="1" height="5"/><rect x="395" y="156" width="1" height="9"/><rect x="401" y="160" width="1" height="5"/><rect x="408" y="160" width="1" height="5"/><rect x="415" y="160" width="1" height="5"/><rect x="421" y="160" width="1" height="5"/><rect x="428" y="148" width="1" height="17"/><text transform="translate(430.8,159.600) scale(.86,1)">75</text><rect x="434" y="160" width="1" height="5"/><rect x="441" y="160" width="1" height="5"/><rect x="448" y="160" width="1" height="5"/><rect x="454" y="160" width="1" height="5"/><rect x="461" y="156" width="1" height="9"/><rect x="468" y="160" width="1" height="5"/><rect x="474" y="160" width="1" height="5"/><rect x="481" y="160" width="1" height="5"/><rect x="487" y="160" width="1" height="5"/><rect x="494" y="148" width="1" height="17"/><text transform="translate(496.8,159.600) scale(.86,1)">100</text><rect x="501" y="160" width="1" height="5"/><rect x="507" y="160" width="1" height="5"/><rect x="514" y="160" width="1" height="5"/><rect x="520" y="160" width="1" height="5"/><rect x="527" y="156" width="1" height="9"/><rect x="534" y="160" width="1" height="5"/><rect x="540" y="160" width="1" height="5"/><rect x="547" y="160" width="1" height="5"/><rect x="553" y="160" width="1" height="5"/><rect x="560" y="148" width="1" height="17"/><text transform="translate(562.8,159.600) scale(.86,1)">125</text><rect x="567" y="160" width="1" height="5"/><rect x="573" y="160" width="1" height="5"/><rect x="580" y="160" width="1" height="5"/><rect x="587" y="160" width="1" height="5"/><rect x="593" y="156" width="1" height="9"/><rect x="600" y="160" width="1" height="5"/><rect x="606" y="160" width="1" height="5"/><rect x="613" y="160" width="1" height="5"/><rect x="620" y="160" width="1" height="5"/><rect x="626" y="148" width="1" height="17"/><text transform="translate(628.8,159.600) scale(.86,1)">150</text><rect x="633" y="160" width="1" height="5"/><rect x="639" y="160" width="1" height="5"/><rect x="646" y="160" width="1" height="5"/><rect x="653" y="160" width="1" height="5"/><rect x="659" y="156" width="1" height="9"/><rect x="666" y="160" width="1" height="5"/><rect x="673" y="160" width="1" height="5"/><rect x="679" y="160" width="1" height="5"/><rect x="686" y="160" width="1" height="5"/><rect x="692" y="148" width="1" height="17"/><text transform="translate(694.8,159.600) scale(.86,1)">175</text><rect x="699" y="160" width="1" height="5"/><rect x="706" y="160" width="1" height="5"/><rect x="712" y="160" width="1" height="5"/><rect x="719" y="160" width="1" height="5"/><rect x="725" y="156" width="1" height="9"/><rect x="732" y="160" width="1" height="5"/><rect x="739" y="160" width="1" height="5"/><rect x="745" y="160" width="1" height="5"/><rect x="752" y="160" width="1" height="5"/><rect x="759" y="148" width="1" height="17"/><text transform="translate(761.8,159.600) scale(.86,1)">200</text><rect x="765" y="160" width="1" height="5"/><rect x="772" y="160" width="1" height="5"/><rect x="778" y="160" width="1" height="5"/><rect x="785" y="160" width="1" height="5"/><rect x="792" y="156" width="1" height="9"/><rect x="798" y="160" width="1" height="5"/><rect x="805" y="160" width="1" height="5"/><rect x="811" y="160" width="1" height="5"/><rect x="818" y="160" width="1" height="5"/><rect x="825" y="148" width="1" height="17"/><text transform="translate(827.8,159.600) scale(.86,1)">225</text><rect x="831" y="160" width="1" height="5"/><rect x="838" y="160" width="1" height="5"/><rect x="845" y="160" width="1" height="5"/><rect x="851" y="160" width="1" height="5"/><rect x="858" y="156" width="1" height="9"/><rect x="864" y="160" width="1" height="5"/><rect x="871" y="160" width="1" height="5"/><rect x="878" y="160" width="1" height="5"/><rect x="884" y="160" width="1" height="5"/><rect x="891" y="148" width="1" height="17"/><text transform="translate(893.8,159.600) scale(.86,1)">250</text><rect x="897" y="160" width="1" height="5"/><rect x="904" y="160" width="1" height="5"/><rect x="911" y="160" width="1" height="5"/><rect x="917" y="160" width="1" height="5"/><rect x="924" y="156" width="1" height="9"/><rect x="931" y="160" width="1" height="5"/><rect x="937" y="160" width="1" height="5"/><rect x="74" y="170" width="4" height="1"/><rect x="74" y="177" width="4" height="1"/><rect x="74" y="183" width="4" height="1"/><rect x="61" y="190" width="17" height="1"/><text transform="translate(66,202.0) scale(.86,1)">2</text><text transform="translate(66,212.3) scale(.86,1)">5</text><rect x="74" y="196" width="4" height="1"/><rect x="74" y="203" width="4" height="1"/><rect x="74" y="210" width="4" height="1"/><rect x="74" y="216" width="4" height="1"/><rect x="69" y="223" width="9" height="1"/><rect x="74" y="230" width="4" height="1"/><rect x="74" y="236" width="4" height="1"/><rect x="74" y="243" width="4" height="1"/><rect x="74" y="249" width="4" height="1"/><rect x="61" y="256" width="17" height="1"/><text transform="translate(66,268.0) scale(.86,1)">5</text><text transform="translate(66,278.3) scale(.86,1)">0</text><rect x="74" y="263" width="4" height="1"/><rect x="74" y="269" width="4" height="1"/><rect x="74" y="276" width="4" height="1"/><rect x="74" y="282" width="4" height="1"/><rect x="69" y="289" width="9" height="1"/><rect x="74" y="296" width="4" height="1"/><rect x="74" y="302" width="4" height="1"/><rect x="74" y="309" width="4" height="1"/><rect x="74" y="316" width="4" height="1"/><rect x="61" y="322" width="17" height="1"/><text transform="translate(66,334.0) scale(.86,1)">7</text><text transform="translate(66,344.3) scale(.86,1)">5</text><rect x="74" y="329" width="4" height="1"/><rect x="74" y="335" width="4" height="1"/><rect x="74" y="342" width="4" height="1"/><rect x="74" y="349" width="4" height="1"/><rect x="69" y="355" width="9" height="1"/><rect x="74" y="362" width="4" height="1"/><rect x="74" y="368" width="4" height="1"/><rect x="74" y="375" width="4" height="1"/><rect x="74" y="382" width="4" height="1"/><rect x="61" y="388" width="17" height="1"/><text transform="translate(66,400.0) scale(.86,1)">1</text><text transform="translate(66,410.3) scale(.86,1)">0</text><text transform="translate(66,420.6) scale(.86,1)">0</text><rect x="74" y="395" width="4" height="1"/><rect x="74" y="401" width="4" height="1"/><rect x="74" y="408" width="4" height="1"/><rect x="74" y="415" width="4" height="1"/><rect x="69" y="421" width="9" height="1"/><rect x="74" y="428" width="4" height="1"/><rect x="74" y="435" width="4" height="1"/><rect x="74" y="441" width="4" height="1"/><rect x="74" y="448" width="4" height="1"/><rect x="61" y="454" width="17" height="1"/><text transform="translate(66,466.0) scale(.86,1)">1</text><text transform="translate(66,476.3) scale(.86,1)">2</text><text transform="translate(66,486.6) scale(.86,1)">5</text><rect x="74" y="461" width="4" height="1"/><rect x="74" y="468" width="4" height="1"/><rect x="74" y="474" width="4" height="1"/><rect x="74" y="481" width="4" height="1"/><rect x="69" y="487" width="9" height="1"/><rect x="74" y="494" width="4" height="1"/><rect x="74" y="501" width="4" height="1"/><rect x="74" y="507" width="4" height="1"/><rect x="74" y="514" width="4" height="1"/><rect x="61" y="521" width="17" height="1"/><text transform="translate(66,533.0) scale(.86,1)">1</text><text transform="translate(66,543.3) scale(.86,1)">5</text><text transform="translate(66,553.6) scale(.86,1)">0</text><rect x="74" y="527" width="4" height="1"/><rect x="74" y="534" width="4" height="1"/><rect x="74" y="540" width="4" height="1"/><rect x="74" y="547" width="4" height="1"/><rect x="69" y="554" width="9" height="1"/><rect x="74" y="560" width="4" height="1"/><rect x="74" y="567" width="4" height="1"/><rect x="74" y="573" width="4" height="1"/><rect x="74" y="580" width="4" height="1"/><rect x="61" y="587" width="17" height="1"/><text transform="translate(66,599.0) scale(.86,1)">1</text><text transform="translate(66,609.3) scale(.86,1)">7</text><text transform="translate(66,619.6) scale(.86,1)">5</text><rect x="74" y="593" width="4" height="1"/><rect x="74" y="600" width="4" height="1"/><rect x="74" y="607" width="4" height="1"/><rect x="74" y="613" width="4" height="1"/><rect x="69" y="620" width="9" height="1"/><rect x="74" y="626" width="4" height="1"/><rect x="74" y="633" width="4" height="1"/><rect x="74" y="640" width="4" height="1"/><rect x="74" y="646" width="4" height="1"/><rect x="61" y="653" width="17" height="1"/><text transform="translate(66,665.0) scale(.86,1)">2</text><text transform="translate(66,675.3) scale(.86,1)">0</text><text transform="translate(66,685.6) scale(.86,1)">0</text><rect x="74" y="659" width="4" height="1"/><rect x="74" y="666" width="4" height="1"/><rect x="74" y="673" width="4" height="1"/><rect x="74" y="679" width="4" height="1"/><rect x="69" y="686" width="9" height="1"/><rect x="74" y="693" width="4" height="1"/><rect x="74" y="699" width="4" height="1"/><rect x="74" y="706" width="4" height="1"/><rect x="74" y="712" width="4" height="1"/><rect x="61" y="719" width="17" height="1"/><text transform="translate(66,731.0) scale(.86,1)">2</text><text transform="translate(66,741.3) scale(.86,1)">2</text><text transform="translate(66,751.6) scale(.86,1)">5</text><rect x="74" y="726" width="4" height="1"/><rect x="74" y="732" width="4" height="1"/><rect x="74" y="739" width="4" height="1"/><rect x="74" y="745" width="4" height="1"/><rect x="69" y="752" width="9" height="1"/><rect x="74" y="759" width="4" height="1"/><rect x="74" y="765" width="4" height="1"/><rect x="74" y="772" width="4" height="1"/><rect x="74" y="779" width="4" height="1"/><rect x="61" y="785" width="17" height="1"/><text transform="translate(66,797.0) scale(.86,1)">2</text><text transform="translate(66,807.3) scale(.86,1)">5</text><text transform="translate(66,817.6) scale(.86,1)">0</text><rect x="74" y="792" width="4" height="1"/><rect x="74" y="798" width="4" height="1"/><rect x="74" y="805" width="4" height="1"/><rect x="74" y="812" width="4" height="1"/><rect x="69" y="818" width="9" height="1"/><rect x="74" y="825" width="4" height="1"/><rect x="74" y="831" width="4" height="1"/><rect x="74" y="838" width="4" height="1"/><rect x="74" y="845" width="4" height="1"/><rect x="61" y="851" width="17" height="1"/><text transform="translate(66,863.0) scale(.86,1)">2</text><text transform="translate(66,873.3) scale(.86,1)">7</text><text transform="translate(66,883.6) scale(.86,1)">5</text><rect x="74" y="858" width="4" height="1"/><rect x="74" y="864" width="4" height="1"/><rect x="74" y="871" width="4" height="1"/><rect x="74" y="878" width="4" height="1"/><rect x="69" y="884" width="9" height="1"/><rect x="74" y="891" width="4" height="1"/><rect x="74" y="898" width="4" height="1"/><rect x="74" y="904" width="4" height="1"/><rect x="74" y="911" width="4" height="1"/><rect x="61" y="917" width="17" height="1"/><text transform="translate(66,929.0) scale(.86,1)">3</text><text transform="translate(66,939.3) scale(.86,1)">0</text><text transform="translate(66,949.6) scale(.86,1)">0</text><rect x="79" y="165" width="865" height="1"/><rect x="78" y="166" width="1" height="755"/></svg><svg style="left:429px;top:160px" width="7" height="5" viewBox="0 0 7 5"><path d="M0 0h7L3.500 4.500z" fill="#2e3436"/></svg><svg style="left:73px;top:444px" width="5" height="7" viewBox="0 0 5 7"><path d="M0 0v7L4.500 3.500z" fill="#2e3436"/></svg><div class="a" style="left:61px;top:148px;width:17px;height:17px;border-radius:4px;background:#fbfaf9;border:1px solid #e0dcd8"></div><svg style="left:62.5px;top:150.0px" width="14" height="14" viewBox="0 0 16 16"><path d="M4 8V5.200q0-3.600 4-3.600t4 3.600V8" fill="none" stroke="#2a2a2a" stroke-width="1.900"/><rect x="1.600" y="7.500" width="12.800" height="7.300" rx="1.200" fill="#f3b51d" stroke="#2a2a2a" stroke-width="1.100"/><path d="M2.400 8.300h11.200v2.300H2.400z" fill="#fbdc6a"/><rect x="7.200" y="9.800" width="1.700" height="2.900" fill="#2a2a2a"/></svg><div class="a" style="left:943px;top:166px;width:18px;height:755px;background:#cecece"></div><div class="a" style="left:79px;top:921px;width:864px;height:18px;background:#cecece"></div><div class="a" style="left:307px;top:927px;width:409px;height:6px;border-radius:3px;background:#808484"></div><div class="a" style="left:949px;top:428px;width:6px;height:249px;border-radius:3px;background:#808484"></div><div class="a" style="left:944px;top:149px;width:16px;height:16px;border:1px solid #c9c5c1;border-radius:4px;background:linear-gradient(180deg,#fff,#efefef)"></div><svg style="left:948px;top:152px" width="8" height="10" viewBox="0 0 8 10"><path d="M1.200 3.200L4 1h1.800v8H3.400V4L1.200 5z" fill="#f4f4f4" stroke="#b5b5b5" stroke-width=".9"/></svg><div class="a" style="left:943px;top:921px;width:18px;height:18px;background:#fbfaf9;border:1px solid #d8d3cf;border-radius:4px"></div><svg style="left:945px;top:922px" width="15" height="16" viewBox="0 0 15 16"><defs><linearGradient id="cms" x1="0" y1="0" x2="1" y2="1"><stop offset="0" stop-color="#a9f0e4"/><stop offset=".45" stop-color="#d9f4c4"/><stop offset=".6" stop-color="#c9dcf4"/><stop offset="1" stop-color="#ffc4cc"/></linearGradient></defs><path d="M1.500 1.500Q8 5 13.500 10.500L4.500 15Q1.500 9 1.500 1.500z" fill="url(#cms)"/></svg><div class="a" style="left:13px;top:152px;width:43px;height:33px;background:#d6d1cd;border-radius:6px"></div><svg style="left:22.0px;top:156.0px" width="24" height="24" viewBox="0 0 24 24"><path d="M5.800 2.800V21L10 17 12.800 23.300 16 21.900 13.200 15.700H18.600Z" fill="#111" stroke="#fff" stroke-width=".7" stroke-opacity=".55"/></svg><svg style="left:22.0px;top:191.0px" width="24" height="24" viewBox="0 0 24 24"><path d="M2.500 20V16Q3 7 7 5.500 13 2.500 20 2" fill="none" stroke="#666" stroke-width=".9"/><rect x="3.800" y="2.700" width="5.600" height="5.600" fill="#1a1aff" stroke="#1010e0" stroke-width="1"/><path d="M4.800 7.300l3.600-3.600" stroke="#a8a8ff" stroke-width="1"/><rect x="19.600" y=".3" width="3.600" height="3.600" fill="#d8d8ff" stroke="#3a3aff" stroke-width=".9"/><rect x=".6" y="19.300" width="3.600" height="3.600" fill="#d8d8ff" stroke="#3a3aff" stroke-width=".9"/><path d="M8.800 8l12.700 6.300L16.800 21z" fill="#111"/></svg><svg style="left:22.0px;top:238.0px" width="24" height="24" viewBox="0 0 24 24"><defs><linearGradient id="gr" x1="0" y1="0" x2="1" y2="1"><stop offset="0" stop-color="#e9eff6"/><stop offset=".5" stop-color="#c5d5e6"/><stop offset="1" stop-color="#9db8d6"/></linearGradient></defs><rect x="2.500" y="2.500" width="19" height="19" fill="url(#gr)" stroke="#111" stroke-width="1.200"/></svg><svg style="left:22.0px;top:272.0px" width="24" height="24" viewBox="0 0 24 24"><defs><radialGradient id="gc" cx=".35" cy=".3" r=".8"><stop offset="0" stop-color="#fdf3f4"/><stop offset=".6" stop-color="#fad3d8"/><stop offset="1" stop-color="#f4a4b0"/></radialGradient></defs><circle cx="12" cy="12" r="9.600" fill="url(#gc)" stroke="#111" stroke-width="1.200"/></svg><svg style="left:22.0px;top:306.0px" width="24" height="24" viewBox="0 0 24 24"><defs><linearGradient id="gs" x1="0" y1="0" x2="1" y2="1"><stop offset="0" stop-color="#fff8d0"/><stop offset="1" stop-color="#f7dd6a"/></linearGradient></defs><path d="M1.500 7L8.500 2 16 5.500 14.500 14 4.500 15.500z" fill="url(#gs)" stroke="#333" stroke-width="1.100"/><path d="M14.500 7.500l2.400 5 5.400.700-4 3.700 1 5.300-4.800-2.600-4.800 2.600 1-5.300-4-3.700 5.400-.700z" fill="url(#gs)" stroke="#333" stroke-width="1.100" stroke-linejoin="round"/></svg><svg style="left:22.0px;top:340.0px" width="24" height="24" viewBox="0 0 24 24"><path d="M12 1.800l9 4.800v10.800l-9 4.800-9-4.800V6.600z" fill="#b9c4e4"/><path d="M12 1.800l9 4.800-9 4.800-9-4.800z" fill="#d5dcf0"/><path d="M12 11.400l9-4.800v10.800l-9 4.800z" fill="#e6e9f4"/><path d="M3 6.600l9 4.800v10.800l-9-4.800z" fill="#aab6e0"/><path d="M4.500 9l6.500 3.400M4.500 10.800l6.500 3.400M4.500 12.600l6.500 3.400M4.500 14.400l6.500 3.400M4.500 16.200l6.500 3.400" stroke="#4a4ad8" stroke-width=".9" stroke-dasharray=".9 .9"/><path d="M12 14.500l9 2.900-9 4.800-5.500-2.900z" fill="#3a3a9c" opacity=".9"/><path d="M12 1.800l9 4.800v10.800l-9 4.800-9-4.800V6.600z" fill="none" stroke="#222" stroke-width="1.200"/></svg><svg style="left:22.0px;top:375.0px" width="24" height="24" viewBox="0 0 24 24"><path d="M12.2 11.4 L12.3 11.4 L12.5 11.4 L12.6 11.4 L12.8 11.5 L13.0 11.6 L13.1 11.8 L13.2 11.9 L13.3 12.2 L13.4 12.4 L13.4 12.7 L13.4 13.0 L13.3 13.2 L13.2 13.5 L13.0 13.8 L12.8 14.0 L12.5 14.3 L12.2 14.4 L11.8 14.6 L11.5 14.7 L11.1 14.7 L10.6 14.6 L10.2 14.5 L9.8 14.4 L9.4 14.1 L9.0 13.8 L8.7 13.4 L8.4 13.0 L8.2 12.5 L8.1 12.0 L8.0 11.4 L8.0 10.9 L8.1 10.3 L8.3 9.7 L8.6 9.2 L9.0 8.7 L9.5 8.2 L10.0 7.8 L10.6 7.5 L11.2 7.3 L11.9 7.1 L12.6 7.1 L13.3 7.2 L14.1 7.4 L14.8 7.6 L15.4 8.0 L16.1 8.5 L16.6 9.1 L17.1 9.8 L17.4 10.6 L17.7 11.4 L17.8 12.2 L17.8 13.1 L17.7 14.0 L17.4 14.9 L17.0 15.7 L16.5 16.5 L15.9 17.2 L15.1 17.8 L14.3 18.4 L13.4 18.8 L12.4 19.0 L11.4 19.1 L10.3 19.1 L9.3 18.9 L8.3 18.6 L7.3 18.1 L6.4 17.4 L5.6 16.7 L4.9 15.8 L4.3 14.8 L3.9 13.7 L3.6 12.5 L3.5 11.4 L3.6 10.2 L3.9 9.0 L4.3 7.8 L4.9 6.7 L5.7 5.7 L6.6 4.8 L7.6 4.0 L8.8 3.4 L10.0 2.9 L11.4 2.7 L12.7 2.6 L14.1 2.7 L15.4 3.1 L16.7 3.6 L18.0 4.3 L19.1 5.2 L20.1 6.3 L20.9 7.5 L21.6 8.8 L22.0 10.2 L22.3 11.7 L22.3 13.2 L22.1 14.7 L21.7 16.2 L21.1 17.7 L20.3 19.0 L19.2 20.2" fill="none" stroke="#222" stroke-width="1.250" stroke-linecap="round"/></svg><svg style="left:22.0px;top:421.0px" width="24" height="24" viewBox="0 0 24 24"><path d="M1.600 2.500H14M1.600 2.500Q8 6 9.800 21.500M14 2.500Q10.300 10 10.400 21" fill="none" stroke="#222" stroke-width="1.100"/><path d="M4.300 22.300L10 22.800" stroke="#111" stroke-width="1"/><rect x=".4" y="20.200" width="4" height="4" fill="#fff" stroke="#111" stroke-width="1.100"/><rect x="9.800" y="21.400" width="2.600" height="2.600" fill="#fff" stroke="#111" stroke-width="1"/><path d="M19.300.400L24 4.600 19.600 11.200 14.800 7.400Z" fill="#6fa0d6" stroke="#1d3f70" stroke-width=".9"/><path d="M19.600 1.800L22.600 4.500" stroke="#d4e4f6" stroke-width="1.400"/><path d="M14.800 7.400L19.600 11.200 18.200 13.600 14 10.400Z" fill="#f2c84a" stroke="#6a5210" stroke-width=".8"/><path d="M14 10.400L18.200 13.600 12.400 22.600Z" fill="#555" stroke="#222" stroke-width=".8"/><path d="M15.800 12.600L13 21" stroke="#eee" stroke-width=".9"/></svg><svg style="left:22.0px;top:455.0px" width="24" height="24" viewBox="0 0 24 24"><path d="M1.600 3Q4 1.200 6.500 2.200L1.800 12.800Q5 10.800 7.800 12.400 9.500 14 8 17.500 6.800 21.500 10.500 22 16 22.300 21.500 19.500" fill="none" stroke="#222" stroke-width="1.200" stroke-linejoin="round"/><path d="M16 1.200L23.300 7 18.500 15.800 11.200 10Z" fill="#f6b41a" stroke="#6a4a00" stroke-width=".9"/><path d="M17.300 3.300L21.700 6.900" stroke="#fde9a0" stroke-width="2.200"/><path d="M14 8L19.800 12.600" stroke="#d98c0a" stroke-width="1.200"/><path d="M11.200 10L18.500 15.800 11.300 22Z" fill="#f6ead2" stroke="#333" stroke-width=".9"/><path d="M11.300 22L11.300 18.300 14 20.200Z" fill="#111"/></svg><svg style="left:22.0px;top:490.0px" width="24" height="24" viewBox="0 0 24 24"><path d="M.3.800Q6.500 1 8 5 5 10 6 16 7 20.500 11.500 21.200 17 21.800 23.500 20 17 24 9.500 23.500 1.200 22.500 .9 14 .9 8 3.800 4.500 2.500 2 .3.800Z" fill="#111"/><path d="M15.300.700L23.800 3.400 22.300 7 13.900 4.800Z" fill="#6fa0d6" stroke="#1d3f70" stroke-width=".8"/><path d="M13.600 5.200L22.100 7.500 21.500 9.300 13 7Z" fill="#d51c1c" stroke="#700" stroke-width=".5"/><path d="M12.600 7.800L21.500 10.200 18.500 16.500 11.200 20.600 10.200 13.500Z" fill="#f6c62a" stroke="#222" stroke-width="1.100" stroke-linejoin="round"/><path d="M11.400 20.300L15.300 12.800" stroke="#222" stroke-width="1"/><circle cx="15.500" cy="12.400" r="1.200" fill="#222"/></svg><svg style="left:22.0px;top:524.0px" width="24" height="24" viewBox="0 0 24 24"><path d="M8.800 2.800h5L20.500 21.500h-5l-1.200-3.700H7.400L6.200 21.500H1.300zM8.600 14.200h4.500L10.900 7.300z" fill="#141414"/><path d="M18.800 2.300h3.600M20.600 2.300v20.200M18.800 22.500h3.600" stroke="#333" stroke-width=".9"/></svg><svg style="left:22.0px;top:572.0px" width="24" height="24" viewBox="0 0 24 24"><defs><linearGradient id="gg" x1="0" y1="0" x2="1" y2="1"><stop offset="0" stop-color="#5aa575"/><stop offset=".3" stop-color="#cfe8d6"/><stop offset=".55" stop-color="#e4f2e6"/><stop offset="1" stop-color="#4f9f6e"/></linearGradient></defs><rect x="1.500" y="1.500" width="21.500" height="21" fill="url(#gg)" stroke="#4b9a68" stroke-width=".9"/><path d="M6 7.500L18.500 18.500" stroke="#333" stroke-width="1.300"/><rect x="3.800" y="5.300" width="4.200" height="4.200" rx=".8" fill="#fff" stroke="#444" stroke-width="1.200"/><rect x="16.300" y="16.200" width="4.200" height="4.200" rx=".8" fill="#fff" stroke="#444" stroke-width="1.200"/></svg><svg style="left:22.0px;top:606.0px" width="24" height="24" viewBox="0 0 24 24"><defs><linearGradient id="gm" x1="0" y1="0" x2="1" y2="1"><stop offset="0" stop-color="#6f9fb0"/><stop offset=".5" stop-color="#7fb5a8"/><stop offset="1" stop-color="#4d9a80"/></linearGradient></defs><path d="M5 4.500Q12 3.500 20 5.500 17.500 12 19.500 19.500 12 18 4.500 20 8 12 5 4.500z" fill="url(#gm)" stroke="#2a5f5a" stroke-width=".7"/><rect x="2.300" y="2.300" width="4.200" height="4.200" fill="#fff" stroke="#111" stroke-width="1.200"/><rect x="17.500" y="2.300" width="4.200" height="4.200" fill="#fff" stroke="#111" stroke-width="1.200"/><rect x="2.300" y="17.500" width="4.200" height="4.200" fill="#fff" stroke="#111" stroke-width="1.200"/><rect x="17.500" y="17.500" width="4.200" height="4.200" fill="#fff" stroke="#111" stroke-width="1.200"/></svg><svg style="left:22.0px;top:640.0px" width="24" height="24" viewBox="0 0 24 24"><path d="M16.200 3.500Q18.500-.5 22 1 25.200 3.200 22.500 6.800L20.300 8.600 21.300 9.800 19.300 11.700 13.200 6.200 15.200 4.300z" fill="#161616"/><path d="M18 3q1.500-1.500 3.200-.8" fill="none" stroke="#777" stroke-width=".8"/><path d="M14.300 7.600L17.800 10.900 8 20.300 5.600 21 4.800 19.800 5.700 17.300z" fill="#dfe7f1" stroke="#444" stroke-width="1"/><path d="M14 10.500L7 17.500" stroke="#8fa9cc" stroke-width="1.200"/><path d="M4.700 20.800q-1.600 2.200-.3 3 1.600.4 1.500-1.600z" fill="#7fa9dc" stroke="#2d5f9a" stroke-width=".6"/></svg><svg style="left:22.0px;top:674.0px" width="24" height="24" viewBox="0 0 24 24"><defs><linearGradient id="gb" x1="0" y1="0" x2="1" y2="1"><stop offset="0" stop-color="#b9d4ec"/><stop offset=".5" stop-color="#6f9fcf"/><stop offset="1" stop-color="#2f5f9a"/></linearGradient></defs><ellipse cx="11.200" cy="21.500" rx="10" ry="2" fill="#a5d9ae" stroke="#2f7a40" stroke-width=".8"/><path d="M5 6.400L18.700.900 23.500 9.800Q23 13.500 10.500 16.700z" fill="url(#gb)" stroke="#1d3050" stroke-width="1"/><path d="M5 6.400Q9 1.500 18.700.900 16 6 5 6.400z" fill="#dcebf7" stroke="#1d3050" stroke-width=".9"/><path d="M5 6.600Q3.500 8 5.500 12.500 7.500 16.500 7 21L12 21.200Q10 17 10.500 16.700 7 10 7.500 6.500z" fill="#9ad4a4" stroke="#2f7a40" stroke-width=".8"/><path d="M8.600.300Q6.500 5 12.300 9.600" fill="none" stroke="#888" stroke-width="1"/><circle cx="12.300" cy="9.800" r=".9" fill="#ddd" stroke="#555" stroke-width=".5"/></svg><svg style="left:22.0px;top:723.0px" width="24" height="24" viewBox="0 0 24 24"><defs><linearGradient id="gt" x1="0" y1="0" x2="0" y2="1"><stop offset="0" stop-color="#8c8c8c"/><stop offset="1" stop-color="#dedede"/></linearGradient></defs><path d="M1 21.500V13h4.500Q8 12 9 8q1.500-5.500 6.500-5.500 5 0 5.500 4.500-2.500-2.500-5-1-2 1.500-.5 3.500 1.500 1.500 3.500.5-.5 3-3 3H23v8.500z" fill="url(#gt)"/><path d="M5.500 13Q8 12 9 8q1.500-5.500 6.500-5.500 5 0 5.500 4.500-2.500-2.500-5-1-2 1.500-.5 3.500 1.500 1.500 3.500.5" fill="none" stroke="#444" stroke-width="1.300"/></svg><svg style="left:22.0px;top:757.0px" width="24" height="24" viewBox="0 0 24 24"><path d="M11.500 11l5-2 4.500 10.500-5.500 2.500z" fill="#3f9f3a" stroke="#1c4f1a" stroke-width=".9"/><path d="M13 11.500l2.200-1 4 9.500" fill="none" stroke="#b5e3a0" stroke-width="1.300"/><path d="M12 7.500l3-1.200 1.500 2.700-5 2z" fill="#e8e8e8" stroke="#333" stroke-width=".9"/><path d="M10.500 12.500l1 9" stroke="#d9b23a" stroke-width="1.300"/><g fill="#111"><circle cx="2.500" cy="6" r="1"/><circle cx="5.500" cy="4" r=".9"/><circle cx="3" cy="2.500" r=".7"/><circle cx="6" cy="7.500" r=".9"/><circle cx="8" cy="5.500" r=".8"/><circle cx="3.500" cy="10" r="1"/><circle cx="8.500" cy="9" r=".7"/><circle cx="6.500" cy="1.800" r=".6"/><circle cx="9.500" cy="3.500" r=".6"/></g></svg><svg style="left:22.0px;top:790.0px" width="24" height="24" viewBox="0 0 24 24"><defs><linearGradient id="ge" x1="0" y1="0" x2="0" y2="1"><stop offset="0" stop-color="#f7d9cc"/><stop offset="1" stop-color="#e7a088"/></linearGradient></defs><path d="M13 2l8.500 4.500-8 14.500-8.500-4.500z" fill="url(#ge)" stroke="#222" stroke-width="1.100"/><path d="M8 11.600l8.500 4.500L13.500 21 5 16.500z" fill="#2a2ae8" stroke="#222" stroke-width="1"/><path d="M1.500 21.800h8M14.500 21.800h8" stroke="#222" stroke-width="1.200"/></svg><svg style="left:22.0px;top:824.0px" width="24" height="24" viewBox="0 0 24 24"><path d="M13 5.500h6.500V15M8.500 10l-2 5" fill="none" stroke="#222" stroke-width="1.100"/><rect x="5.500" y="2" width="7" height="6.500" fill="#b7cfe8" stroke="#222" stroke-width="1.100"/><rect x="1.500" y="15.500" width="7" height="6.500" fill="#b7cfe8" stroke="#222" stroke-width="1.100"/><rect x="15.500" y="15.500" width="7" height="6.500" fill="#b7cfe8" stroke="#222" stroke-width="1.100"/><rect x="9" y="10" width="7" height="4.500" fill="#f4d03a" stroke="#7a5a00" stroke-width="1"/><path d="M10.500 12.200h4" stroke="#fff3a0" stroke-width="1"/></svg><svg style="left:22.0px;top:872.0px" width="24" height="24" viewBox="0 0 24 24"><defs><radialGradient id="gz" cx=".4" cy=".35" r=".7"><stop offset="0" stop-color="#f4f8fc"/><stop offset="1" stop-color="#bcd2e8"/></radialGradient></defs><path d="M14.500 14.500l7 7" stroke="#6a4a00" stroke-width="4.600" stroke-linecap="round"/><path d="M15.500 15.500l6 6" stroke="#f4a81e" stroke-width="3" stroke-linecap="round"/><circle cx="9.300" cy="9.300" r="7.300" fill="url(#gz)" stroke="#333" stroke-width="1.700"/><circle cx="9.300" cy="9.300" r="6" fill="none" stroke="#fff" stroke-width=".8" opacity=".8"/></svg><svg style="left:22.0px;top:905.0px" width="24" height="24" viewBox="0 0 24 24"><defs><linearGradient id="gme" x1="0" y1="0" x2="1" y2="1"><stop offset="0" stop-color="#fbe9df"/><stop offset="1" stop-color="#f2b9a0"/></linearGradient></defs><path d="M2.500 7L12.500 2l9 16.500-10 5z" fill="url(#gme)" stroke="#333" stroke-width="1.100"/><path d="M4.500 9.500l3-1.500M6 12.300l2-1M7.500 15l3-1.500M9 17.800l2-1M10.500 20.500l3-1.500" stroke="#8a4a3a" stroke-width=".9"/></svg><div class="a" style="left:13px;top:226px;width:43px;height:1px;background:#dedad6"></div><div class="a" style="left:13px;top:410px;width:43px;height:1px;background:#dedad6"></div><div class="a" style="left:13px;top:560px;width:43px;height:1px;background:#dedad6"></div><div class="a" style="left:13px;top:710px;width:43px;height:1px;background:#dedad6"></div><div class="a" style="left:13px;top:860px;width:43px;height:1px;background:#dedad6"></div><div class="a" style="left:961px;top:148px;width:1px;height:791px;background:#cec9c4;border-radius:0px;"></div><svg style="left:962.0px;top:157.0px" width="16" height="16" viewBox="0 0 16 16"><path d="M1 1h14v14H1z" fill="#fff"/><path d="M.2 1h14.300M1 .3v14.700" stroke="#111" stroke-width="1.600"/><path d="M.2 15.700V13.800Q3 10.300 6 9.800L12.400 3.400 15.900.700 15.600 5 9.700 11Q8.200 14.600 3.500 15.700z" fill="#111"/><path d="M7.500 10.500L12.600 5.400" stroke="#999" stroke-width="1"/><path d="M12.800 3.100L15.900.600 15.700 5.100 14.300 5.300z" fill="#f5a81c"/></svg><div class="t" style="left:979.3px;top:158px;font-size:15px;color:#2e3436;letter-spacing:-.1px">Fill and Stroke (Shift+Ctrl+F)</div><div class="a" style="left:1328px;top:155px;width:11px;height:11px;border:1px solid #8f9292;border-radius:2px;background:#fcfcfc"></div><svg style="left:1330px;top:157.5px" width="7" height="6" viewBox="0 0 7 6"><path d="M6 0v6L.5 3z" fill="#8a8d8d"/></svg><div class="a" style="left:1364px;top:155px;width:11px;height:11px;border:1px solid #8f9292;border-radius:2px;background:#fcfcfc"></div><svg style="left:1366px;top:157px" width="7" height="7" viewBox="0 0 7 7"><path d="M.8.800l5.400 5.400M6.200.800L.8 6.200" stroke="#7a7d7d" stroke-width="1.900"/></svg><div class="a" style="left:962px;top:182px;width:426px;height:450px;background:transparent;border:1px solid #d5d0cb;border-radius:0px;"></div><div class="a" style="left:963px;top:630px;width:425px;height:2px;background:#cfc9c3"></div><div class="a" style="left:966px;top:186px;width:418px;height:317px;background:#fff;border:1px solid #cdc7c2;border-radius:0px;"></div><div class="a" style="left:967px;top:187px;width:416px;height:36px;background:#e1deda;border-radius:0px;"></div><div class="a" style="left:967px;top:223px;width:416px;height:1px;background:#cdc7c2"></div><div class="a" style="left:1047px;top:221px;width:129px;height:3px;background:#3584e4;border-radius:0px;"></div><svg style="left:987px;top:197px" width="16" height="16" viewBox="0 0 16 16"><defs><linearGradient id="tf" x1="0" y1="0" x2="1" y2="1"><stop offset="0" stop-color="#a9c4e6"/><stop offset=".5" stop-color="#dfe9f5"/><stop offset="1" stop-color="#c3d6ee"/></linearGradient></defs><rect width="16" height="16" fill="url(#tf)"/></svg><div class="t" style="left:1008px;top:197px;font-size:15px;color:#9a9996;font-weight:bold;letter-spacing:-.2px">Fill</div><svg style="left:1059px;top:197px" width="16" height="16" viewBox="0 0 16 16"><defs><linearGradient id="tsp" x1="0" y1="0" x2="1" y2="1"><stop offset="0" stop-color="#111"/><stop offset=".6" stop-color="#555"/><stop offset="1" stop-color="#d8d8d8"/></linearGradient></defs><rect x=".8" y=".8" width="14.400" height="14.400" fill="#e9e7e4" stroke="url(#tsp)" stroke-width="1.500"/></svg><div class="t" style="left:1080px;top:197px;font-size:15px;color:#2e3436;font-weight:bold;letter-spacing:-.3px">Stroke paint</div><svg style="left:1196px;top:197px" width="16" height="16" viewBox="0 0 16 16"><path d="M0 3.500h12" stroke="#111" stroke-width="1.400"/><path d="M10.500.500L15.500 3.500 10.500 6.500z" fill="#111"/><path d="M0 9h15" stroke="#111" stroke-width="1.800" stroke-dasharray="2.200 1.200"/><path d="M0 14.300h15.500" stroke="#111" stroke-width="1.400"/></svg><div class="t" style="left:1217px;top:197px;font-size:15px;color:#9a9996;font-weight:bold;letter-spacing:-.3px">Stroke style</div><svg style="left:988px;top:244px" width="10" height="10" viewBox="0 0 10 10"><path d="M1 1l8 8M9 1L1 9" stroke="#c6c6c6" stroke-width="1.800"/></svg><svg style="left:1021px;top:241px" width="16" height="16" viewBox="0 0 16 16"><rect x=".5" y=".5" width="15" height="15" fill="#e3e9f6" stroke="#d3d7e0"/><path d="M3 1v14M5.500 1v14M8 1v14M10.500 1v14M13 1v14" stroke="#dce3f2" stroke-width="1"/></svg><svg style="left:1057px;top:241px" width="16" height="16" viewBox="0 0 16 16"><defs><linearGradient id="pl" x1="0" y1="0" x2="1" y2="1"><stop offset="0" stop-color="#fbfcfe"/><stop offset="1" stop-color="#dfe6f4"/></linearGradient></defs><rect x=".5" y=".5" width="15" height="15" fill="url(#pl)" stroke="#d6dae2"/></svg><svg style="left:1093px;top:241px" width="16" height="16" viewBox="0 0 16 16"><defs><radialGradient id="pr"><stop offset="0" stop-color="#fff"/><stop offset="1" stop-color="#dfe6f4"/></radialGradient></defs><rect x=".5" y=".5" width="15" height="15" fill="url(#pr)" stroke="#d6dae2"/></svg><svg style="left:1129px;top:241px" width="16" height="16" viewBox="0 0 16 16"><rect x=".5" y=".5" width="15" height="15" fill="#fff" stroke="#d6dae2"/><rect x="1" y="1" width="7" height="7" fill="#e1e7f5"/><rect x="8" y="8" width="7" height="7" fill="#e1e7f5"/></svg><svg style="left:1165px;top:241px" width="16" height="16" viewBox="0 0 16 16"><rect x=".5" y=".5" width="15" height="15" fill="#e6ebf7" stroke="#d6dae2"/><circle cx="5" cy="5" r="2" fill="#f6f8fc"/><circle cx="11" cy="5" r="2" fill="#f6f8fc"/><circle cx="5" cy="11" r="2" fill="#f6f8fc"/><circle cx="11" cy="11" r="2" fill="#f6f8fc"/></svg><svg style="left:1201px;top:241px" width="16" height="16" viewBox="0 0 16 16"><rect x=".5" y=".5" width="15" height="15" fill="#fff" stroke="#d3d7e2"/><path d="M2.500 2.500v11h11" fill="none" stroke="#dde2ee" stroke-width="1.500"/></svg><div class="t" style="left:1240px;top:238px;font-size:19px;color:#d0d0d0;font-weight:bold">?</div><div class="t" style="left:975px;top:278px;font-size:15px;color:#2e3436;font-weight:bold;letter-spacing:-.18px">No objects</div><div class="t" style="left:1154px;top:520px;font-size:15px;color:#929595;letter-spacing:-.1px">Blend mode:</div><div class="a" style="left:1248px;top:510px;width:126px;height:34px;background:#f8f7f6;border:1px solid #cdc7c2;border-radius:5px;box-shadow:0 1px 0 rgba(0,0,0,.05)"></div><div class="t" style="left:1260px;top:519.0px;font-size:15px;color:#a5a8a8;letter-spacing:.2px">Normal</div><svg style="left:1351px;top:524.5px" width="10" height="6" viewBox="0 0 10 6"><path d="M0 0h10L5 5.500z" fill="#9a9d9d"/></svg><div class="a" style="left:966px;top:552px;width:418px;height:1px;background:#dcd8d4"></div><div class="a" style="left:966px;top:561px;width:347px;height:32px;background:#faf9f8;border:1px solid #cdc7c2;border-radius:4px;"></div><div class="t" style="left:971px;top:571px;font-size:15px;color:#929595;letter-spacing:-.3px">Blur (%)</div><div class="a" style="left:966px;top:593px;width:347px;height:32px;background:#faf9f8;border:1px solid #cdc7c2;border-radius:4px;"></div><div class="t" style="left:971px;top:603px;font-size:15px;color:#f3f2f1;letter-spacing:-.12px">Opacity (%)</div><div class="a" style="left:1313px;top:561px;width:71px;height:64px;background:#f9f8f7;border-radius:0px;"></div><div class="a" style="left:1350px;top:562px;width:1px;height:62px;background:#eeeceb"></div><div class="a" style="left:1367px;top:562px;width:1px;height:62px;background:#eeeceb"></div><div class="t" style="left:1315px;top:569.5px;font-size:15px;color:#a9abab;">0.0</div><div class="a" style="left:1354px;top:576px;width:10px;height:2px;background:#d8d8d7"></div><div class="a" style="left:1371px;top:576px;width:10px;height:2px;background:#d8d8d7"></div><div class="a" style="left:1375px;top:572px;width:2px;height:10px;background:#d8d8d7"></div><div class="t" style="left:1315px;top:601.5px;font-size:15px;color:#a9abab;">100.0</div><div class="a" style="left:1354px;top:608px;width:10px;height:2px;background:#d8d8d7"></div><div class="a" style="left:1371px;top:608px;width:10px;height:2px;background:#d8d8d7"></div><div class="a" style="left:1375px;top:604px;width:2px;height:10px;background:#d8d8d7"></div><svg style="left:962px;top:642px" width="16" height="16" viewBox="0 0 16 16"><path d="M3 1.500h9.500l-2 3H1zM5.500 6h9.500l-2 3H3.500zM3.500 10.500H13l-2 3H1.500z" fill="#111"/></svg><div class="t" style="left:980px;top:642px;font-size:15px;color:#2e3436;letter-spacing:-.22px">Objects</div><div class="a" style="left:1328px;top:639px;width:11px;height:11px;border:1px solid #8f9292;border-radius:2px;background:#fcfcfc"></div><svg style="left:1330px;top:641.5px" width="7" height="6" viewBox="0 0 7 6"><path d="M6 0v6L.5 3z" fill="#8a8d8d"/></svg><div class="a" style="left:1364px;top:639px;width:11px;height:11px;border:1px solid #8f9292;border-radius:2px;background:#fcfcfc"></div><svg style="left:1366px;top:641px" width="7" height="7" viewBox="0 0 7 7"><path d="M.8.800l5.400 5.400M6.200.800L.8 6.200" stroke="#7a7d7d" stroke-width="1.900"/></svg><div class="a" style="left:962px;top:666px;width:426px;height:234px;background:transparent;border:1px solid #d5d0cb;border-radius:0px;"></div><div class="a" style="left:963px;top:898px;width:425px;height:2px;background:#cfc9c3"></div><div class="a" style="left:966px;top:670px;width:418px;height:73px;background:#fff;border:1px solid #cdc7c2;border-radius:0px;"></div><div class="t" style="left:973px;top:675px;font-size:15px;color:#929595;font-weight:bold;letter-spacing:-.3px">V</div><div class="t" style="left:1003px;top:675px;font-size:15px;color:#929595;font-weight:bold;letter-spacing:-.3px">L</div><div class="t" style="left:1031px;top:675px;font-size:15px;color:#929595;font-weight:bold;letter-spacing:-.3px">T</div><div class="t" style="left:1060px;top:675px;font-size:15px;color:#929595;font-weight:bold;letter-spacing:-.3px">CM</div><div class="t" style="left:1097px;top:675px;font-size:15px;color:#929595;font-weight:bold;letter-spacing:-.3px">HL</div><div class="t" style="left:1129px;top:675px;font-size:15px;color:#929595;font-weight:bold;letter-spacing:-.3px">Label</div><div class="a" style="left:995px;top:672px;width:1px;height:23px;background:#f1efee"></div><div class="a" style="left:1024px;top:672px;width:1px;height:23px;background:#f1efee"></div><div class="a" style="left:1053px;top:672px;width:1px;height:23px;background:#f1efee"></div><div class="a" style="left:1089px;top:672px;width:1px;height:23px;background:#f1efee"></div><div class="a" style="left:1121px;top:672px;width:1px;height:23px;background:#f1efee"></div><div class="a" style="left:967px;top:696px;width:416px;height:32px;background:#3584e4;border-radius:0px;"></div><svg style="left:973px;top:703px" width="16" height="16" viewBox="0 0 16 16"><path d="M.5 9Q8 2.500 15.500 9 8 15 .5 9z" fill="#fff" stroke="#111" stroke-width="1.200"/><circle cx="8" cy="8.800" r="3.200" fill="#111"/><circle cx="7" cy="7.800" r="1" fill="#999"/><path d="M2.500 5.500L1 3M5.200 4L4.500 1.200M8 3.500V.5M10.800 4l.7-2.800M13.500 5.500L15 3" stroke="#111" stroke-width="1.100"/></svg><svg style="left:1003px;top:703px" width="16" height="16" viewBox="0 0 16 16"><path d="M3.800 8V5q0-3.600 3.600-3.600 3.200 0 3.600 3" fill="none" stroke="#111" stroke-width="1.500"/><rect x="2.300" y="7.600" width="10.600" height="7.600" rx="1" fill="#f3e7a8" stroke="#111" stroke-width="1.100" transform="rotate(-7 8 11)"/><path d="M7 10.200h2v1.200l-.5 1.800h-1l-.5-1.800z" fill="#111" transform="rotate(-7 8 11)"/></svg><svg style="left:1031px;top:704px" width="16" height="16" viewBox="0 0 16 16"><path d="M1 3l9.500-1 5 2.500-9.500 1.500z" fill="#fff" stroke="#111" stroke-width=".9"/><path d="M1 3v2.800l5 3 9.500-1.500V4.500L6 6zM1 6.800v2.700l5 3 9.500-1.500V8.300L6 9.800z" fill="#fff" stroke="#111" stroke-width=".9"/></svg><div class="a" style="left:1101px;top:702px;width:10px;height:20px;background:#ff0000;border:1px solid #333"></div><div class="a" style="left:1102px;top:703px;width:8px;height:9px;background:#b9b9b9"></div><div class="a" style="left:1102px;top:703px;width:4px;height:4px;background:#a5a5a5"></div><div class="a" style="left:1106px;top:707px;width:4px;height:5px;background:#a5a5a5"></div><svg style="left:1127px;top:710px" width="10" height="6" viewBox="0 0 10 6"><path d="M0 0h10L5 5.500z" fill="#cfe2fa"/></svg><div class="t" style="left:1144.5px;top:705px;font-size:15px;color:#fff;letter-spacing:-.45px">Layer 1</div><div class="a" style="left:967px;top:728px;width:416px;height:14px;overflow:hidden"><svg style="left:6px;top:7px" width="16" height="16" viewBox="0 0 16 16"><path d="M.5 9Q8 2.500 15.500 9 8 15 .5 9z" fill="#fff" stroke="#111" stroke-width="1.200"/><circle cx="8" cy="8.800" r="3.200" fill="#111"/><circle cx="7" cy="7.800" r="1" fill="#999"/><path d="M2.500 5.500L1 3M5.200 4L4.500 1.200M8 3.500V.5M10.800 4l.7-2.800M13.500 5.500L15 3" stroke="#111" stroke-width="1.100"/></svg><svg style="left:36px;top:7px" width="16" height="16" viewBox="0 0 16 16"><path d="M3.800 8V5q0-3.600 3.600-3.600 3.200 0 3.600 3" fill="none" stroke="#111" stroke-width="1.500"/></svg><div class="t" style="left:64px;top:8px;font-size:10px;color:#222">abc</div><div class="a" style="left:134px;top:6px;width:10px;height:20px;background:#b9b9b9;border:1px solid #333"></div><div class="t" style="left:214px;top:9px;font-size:15px;color:#2e3436">t917</div></div><svg style="left:978px;top:754px" width="12" height="12" viewBox="0 0 12 12"><path d="M6 1v10M1 6h10" stroke="#204a87" stroke-width="3.400" stroke-linecap="round"/><path d="M6 1.500v9M1.500 6h9" stroke="#5b8fd6" stroke-width="1.600" stroke-linecap="round"/></svg><svg style="left:1014px;top:754px" width="12" height="12" viewBox="0 0 12 12"><path d="M1 6h10" stroke="#204a87" stroke-width="3.400" stroke-linecap="round"/><path d="M1.500 6h9" stroke="#5b8fd6" stroke-width="1.600" stroke-linecap="round"/></svg><svg style="left:1214px;top:752px" width="16" height="16" viewBox="0 0 16 16"><path d="M5 1.500h9M1 5h7M1 9h5M5 13h9" stroke="#222" stroke-width="2.200" stroke-linecap="round"/><path d="M14.500 4.500L11.500 7.500l3 3" fill="none" stroke="#d9730a" stroke-width="1.600"/></svg><svg style="left:1249px;top:752px" width="16" height="16" viewBox="0 0 16 16"><path d="M1.500 1.500h13" stroke="#8c8f8f" stroke-width="1.600"/><path d="M1.500 11L8 5l6.500 6" fill="none" stroke="#8c8f8f" stroke-width="1.400"/><path d="M3 13.500L8 9l5 4.500" fill="none" stroke="#8c8f8f" stroke-width="1.200"/></svg><svg style="left:1285px;top:752px" width="16" height="16" viewBox="0 0 16 16"><path d="M1.500 8L8 2l6.500 6" fill="none" stroke="#8c8f8f" stroke-width="1.400"/><path d="M3 9.500L8 5l5 4.500" fill="none" stroke="#8c8f8f" stroke-width="1"/><circle cx="8" cy="10.500" r=".9" fill="#8c8f8f"/><circle cx="8" cy="14" r="1.100" fill="none" stroke="#8c8f8f" stroke-width=".8"/></svg><svg style="left:1321px;top:752px" width="16" height="16" viewBox="0 0 16 16"><path d="M1.500 8L8 14l6.500-6" fill="none" stroke="#8c8f8f" stroke-width="1.400"/><path d="M3 6.500L8 11l5-4.500" fill="none" stroke="#8c8f8f" stroke-width="1"/><circle cx="8" cy="5.500" r=".9" fill="#8c8f8f"/><circle cx="8" cy="2" r="1.100" fill="none" stroke="#8c8f8f" stroke-width=".8"/></svg><svg style="left:1357px;top:752px" width="16" height="16" viewBox="0 0 16 16"><path d="M1.500 14.500h13" stroke="#8c8f8f" stroke-width="1.600"/><path d="M1.500 5L8 11l6.500-6" fill="none" stroke="#8c8f8f" stroke-width="1.400"/><path d="M3 2.500L8 7l5-4.500" fill="none" stroke="#8c8f8f" stroke-width="1.200"/></svg><div class="t" style="left:1154px;top:790px;font-size:15px;color:#2e3436;letter-spacing:-.1px">Blend mode:</div><div class="a" style="left:1248px;top:780px;width:126px;height:34px;background:linear-gradient(180deg,#f7f6f5,#efedeb);border:1px solid #cdc7c2;border-radius:5px;box-shadow:0 1px 0 rgba(0,0,0,.05)"></div><div class="t" style="left:1260px;top:789.0px;font-size:15px;color:#2e3436;letter-spacing:.2px">Normal</div><svg style="left:1351px;top:794.5px" width="10" height="6" viewBox="0 0 10 6"><path d="M0 0h10L5 5.500z" fill="#2e3436"/></svg><div class="a" style="left:966px;top:822px;width:418px;height:1px;background:#dcd8d4"></div><div class="a" style="left:966px;top:831px;width:345px;height:32px;background:#e1deda;border-radius:0px;"></div><div class="a" style="left:966px;top:831px;width:2px;height:32px;background:#2a6fd0;border-radius:0px;"></div><div class="a" style="left:966px;top:831px;width:345px;height:1px;background:#cfcac5"></div><div class="t" style="left:971px;top:841px;font-size:15px;color:#111;letter-spacing:-.3px">Blur (%)</div><div class="a" style="left:966px;top:863px;width:345px;height:32px;background:#3584e4;border-radius:0px;border-radius:0 0 0 3px"></div><div class="t" style="left:971px;top:873px;font-size:15px;color:#fff;letter-spacing:-.12px">Opacity (%)</div><div class="a" style="left:1311px;top:831px;width:73px;height:64px;background:#fff;border-radius:0px;"></div><div class="a" style="left:1350px;top:832px;width:1px;height:62px;background:#eeeceb"></div><div class="a" style="left:1367px;top:832px;width:1px;height:62px;background:#eeeceb"></div><div class="t" style="left:1314px;top:839.5px;font-size:15px;color:#2e3436;font-family:'Liberation Serif',serif;font-size:16px">0.0</div><div class="a" style="left:1354px;top:846px;width:10px;height:2px;background:#d8d8d7"></div><div class="a" style="left:1371px;top:846px;width:10px;height:2px;background:#2e3436"></div><div class="a" style="left:1375px;top:842px;width:2px;height:10px;background:#2e3436"></div><div class="t" style="left:1314px;top:871.5px;font-size:15px;color:#2e3436;font-family:'Liberation Serif',serif;font-size:16px">100.0</div><div class="a" style="left:1354px;top:878px;width:10px;height:2px;background:#2e3436"></div><div class="a" style="left:1371px;top:878px;width:10px;height:2px;background:#d8d8d7"></div><div class="a" style="left:1375px;top:874px;width:2px;height:10px;background:#d8d8d7"></div><div class="a" style="left:1393px;top:152px;width:36px;height:34px;background:#d6d1cd;border-radius:6px;"></div><div class="a" style="left:1393px;top:390px;width:36px;height:34px;background:#d6d1cd;border-radius:6px;"></div><div class="a" style="left:1393px;top:495px;width:36px;height:34px;background:#d6d1cd;border-radius:6px;"></div><div class="a" style="left:1393px;top:614px;width:36px;height:34px;background:#d6d1cd;border-radius:6px;"></div><div class="a" style="left:1393px;top:803px;width:36px;height:34px;background:#d6d1cd;border-radius:6px;"></div><div class="a" style="left:1393px;top:838px;width:36px;height:34px;background:#d6d1cd;border-radius:6px;"></div><div class="a" style="left:1393px;top:193px;width:36px;height:1px;background:#dedad6"></div><div class="a" style="left:1393px;top:382px;width:36px;height:1px;background:#dedad6"></div><div class="a" style="left:1393px;top:606px;width:36px;height:1px;background:#dedad6"></div><div class="a" style="left:1393px;top:760px;width:36px;height:1px;background:#dedad6"></div><svg style="left:1403.0px;top:161.0px" width="16" height="16" viewBox="0 0 16 16"><path d="M3.5 1.0L6.0 3.5L3.5 6.0L1.0 3.5z" fill="#e4e4ff" stroke="#2020ff" stroke-width="1.250"/><path d="M5 5l5.500 5.500" stroke="#111" stroke-width="1.300"/><path d="M11.800 11.800L7.800 10.300 10.300 7.800z" fill="#111"/><path d="M12.5 10.0L15.0 12.5L12.5 15.0L10.0 12.5z" fill="#cfe6cf" stroke="#1f7a1f" stroke-width="1.250"/></svg><svg style="left:1403.0px;top:210.0px" width="16" height="16" viewBox="0 0 16 16"><path d="M3.5 1.0L6.0 3.5L3.5 6.0L1.0 3.5z" fill="#e4e4ff" stroke="#2020ff" stroke-width="1.250"/><path d="M5 5l5.500 5.500" stroke="#111" stroke-width="1.300"/><path d="M11.800 11.800L7.800 10.300 10.300 7.800z" fill="#111"/><path d="M12.5 10.0L15.0 12.5L12.5 15.0L10.0 12.5z" fill="#cfe6cf" stroke="#1f7a1f" stroke-width="1.250"/></svg><svg style="left:1403.0px;top:245.0px" width="16" height="16" viewBox="0 0 16 16"><path d="M13 2v11H2" fill="none" stroke="#d3dccf" stroke-width="1.200" stroke-dasharray="1.500 1"/></svg><svg style="left:1403.0px;top:280.0px" width="16" height="16" viewBox="0 0 16 16"><path d="M13 2v11H2" fill="none" stroke="#d3dccf" stroke-width="1.200" stroke-dasharray="1.500 1"/><path d="M13 10.6L15.4 13L13 15.4L10.6 13z" fill="#e6efe4" stroke="#d5e0d2" stroke-width="1.250"/></svg><svg style="left:1403.0px;top:314.0px" width="16" height="16" viewBox="0 0 16 16"><path d="M13 2v11H2" fill="none" stroke="#d3dccf" stroke-width="1.200" stroke-dasharray="1.500 1"/><path d="M13 3.5L15 5.5L13 7.5L11 5.5z" fill="#e6efe4" stroke="#d5e0d2" stroke-width="1.250"/></svg><svg style="left:1403.0px;top:348.0px" width="16" height="16" viewBox="0 0 16 16"><path d="M13 4v9H2" fill="none" stroke="#d3dccf" stroke-width="1.200" stroke-dasharray="1.500 1"/><circle cx="4" cy="5" r="2" fill="#eef4ec" stroke="#d5e0d2" stroke-width="1"/></svg><svg style="left:1403.0px;top:399.0px" width="16" height="16" viewBox="0 0 16 16"><path d="M3.5 1.0L6.0 3.5L3.5 6.0L1.0 3.5z" fill="#e4e4ff" stroke="#2020ff" stroke-width="1.250"/><path d="M5 5l5.500 5.500" stroke="#111" stroke-width="1.300"/><path d="M11.800 11.800L7.800 10.300 10.300 7.800z" fill="#111"/><path d="M12.5 10.0L15.0 12.5L12.5 15.0L10.0 12.5z" fill="#cfe6cf" stroke="#1f7a1f" stroke-width="1.250"/></svg><svg style="left:1403.0px;top:434.0px" width="16" height="16" viewBox="0 0 16 16"><path d="M2 2.500Q9 2.500 10.500 7 12 12.500 8 13.500 13.500 14.500 15 9" fill="none" stroke="#1f8a1f" stroke-width="1.800" stroke-linecap="round"/></svg><svg style="left:1403.0px;top:468.0px" width="16" height="16" viewBox="0 0 16 16"><path d="M1 13.500L15 5M2 7l13 4" stroke="#555" stroke-width="1.100"/><path d="M8 7L10 9L8 11L6 9z" fill="#9fd39f" stroke="#1f7a1f" stroke-width="1.250"/></svg><svg style="left:1403.0px;top:504.0px" width="16" height="16" viewBox="0 0 16 16"><path d="M1.500 2Q9 2.500 11 7 13 12.500 9.500 14" fill="none" stroke="#555" stroke-width="1.200"/><path d="M7.5 11.1L9.9 13.5L7.5 15.9L5.1 13.5z" fill="#9fd39f" stroke="#1f7a1f" stroke-width="1.250"/><path d="M9.500 14Q14 14.500 15 9" fill="none" stroke="#555" stroke-width="1.200"/></svg><svg style="left:1403.0px;top:538.0px" width="16" height="16" viewBox="0 0 16 16"><path d="M1 2.500Q5 2 7.500 4 12 7.500 9 13 13.500 15 15.500 10" fill="none" stroke="#555" stroke-width="1.200"/><rect x="5.300" y="2.300" width="4" height="4" fill="#9fd39f" stroke="#1f7a1f" stroke-width="1.100"/></svg><svg style="left:1403.0px;top:572.0px" width="16" height="16" viewBox="0 0 16 16"><path d="M1 14.500L15 2.500" stroke="#555" stroke-width="1"/><path d="M3 9.500l3 5M5 8l3 5M9.500 4l3 5M11.500 2.500l3 5" stroke="#d01c1c" stroke-width="1.300"/><path d="M8 6.5L10 8.5L8 10.5L6 8.5z" fill="#9fd39f" stroke="#1f7a1f" stroke-width="1.250"/></svg><svg style="left:1403.0px;top:623.0px" width="16" height="16" viewBox="0 0 16 16"><path d="M3.5 1.0L6.0 3.5L3.5 6.0L1.0 3.5z" fill="#e4e4ff" stroke="#2020ff" stroke-width="1.250"/><path d="M5 5l5.500 5.500" stroke="#111" stroke-width="1.300"/><path d="M11.800 11.800L7.800 10.300 10.300 7.800z" fill="#111"/><path d="M12.5 10.0L15.0 12.5L12.5 15.0L10.0 12.5z" fill="#cfe6cf" stroke="#1f7a1f" stroke-width="1.250"/></svg><svg style="left:1403.0px;top:656.0px" width="16" height="16" viewBox="0 0 16 16"><path d="M14 2v12H2" fill="none" stroke="#9a9a9a" stroke-width="1.300"/><circle cx="5" cy="5.500" r="2" fill="#cfeacf" stroke="#1f7a1f" stroke-width="1.200"/></svg><svg style="left:1403.0px;top:691.0px" width="16" height="16" viewBox="0 0 16 16"><path d="M14 1.500v12.500H1" fill="none" stroke="#333" stroke-width="1.200" stroke-dasharray="1.500 1"/><path d="M3 7h6M6 4v6" stroke="#111" stroke-width="1.300"/></svg><svg style="left:1403.0px;top:727.0px" width="16" height="16" viewBox="0 0 16 16"><path d="M6.300 1h4.200l4.500 12h-3.400l-.7-2.200H6.300L5.600 13H2.200zM7 8.500h3.200L8.600 4z" fill="#111"/><path d="M2 13.300h13" stroke="#5a9a5a" stroke-width="1"/><path d="M2.5 11.3L4.5 13.3L2.5 15.3L0.5 13.3z" fill="#9fd39f" stroke="#1f7a1f" stroke-width="1.250"/></svg><svg style="left:1403.0px;top:777.0px" width="16" height="16" viewBox="0 0 16 16"><defs><linearGradient id="sp" x1="0" y1="0" x2="1" y2="1"><stop offset="0" stop-color="#fff"/><stop offset="1" stop-color="#b5b5b5"/></linearGradient></defs><rect x="2.800" y="1" width="11" height="14" fill="url(#sp)" stroke="#333" stroke-width="1.300"/></svg><svg style="left:1403.0px;top:812.0px" width="16" height="16" viewBox="0 0 16 16"><path d="M2.500 0v16M6.200 0v16M9.800 0v16M13.500 0v16M0 2.500h16M0 6.200h16M0 9.800h16M0 13.500h16" stroke="#1414ff" stroke-width="1.300"/></svg><svg style="left:1403.0px;top:847.0px" width="16" height="16" viewBox="0 0 16 16"><path d="M1.500 0v16M14 0v16M5.500 16L11.500 0" stroke="#1414ff" stroke-width="1.400"/></svg><div class="a" style="left:9px;top:939px;width:1425px;height:21px;background:#f6f5f4"></div><div class="a" style="left:9px;top:939px;width:19px;height:21px;background:#fff"></div><svg style="left:9px;top:939px" width="19" height="21" viewBox="0 0 19 21"><path d="M0 0L19 21M19 0L0 21" stroke="#8a1a1a" stroke-width="1.700"/></svg><div class="a" style="left:28px;top:939px;width:19px;height:21px;background:#000000"></div><div class="a" style="left:47px;top:939px;width:19px;height:21px;background:#1a1a1a"></div><div class="a" style="left:66px;top:939px;width:19px;height:21px;background:#333333"></div><div class="a" style="left:85px;top:939px;width:19px;height:21px;background:#4d4d4d"></div><div class="a" style="left:104px;top:939px;width:19px;height:21px;background:#666666"></div><div class="a" style="left:123px;top:939px;width:19px;height:21px;background:#808080"></div><div class="a" style="left:142px;top:939px;width:19px;height:21px;background:#999999"></div><div class="a" style="left:161px;top:939px;width:19px;height:21px;background:#b3b3b3"></div><div class="a" style="left:180px;top:939px;width:19px;height:21px;background:#cccccc"></div><div class="a" style="left:199px;top:939px;width:19px;height:21px;background:#e6e6e6"></div><div class="a" style="left:218px;top:939px;width:19px;height:21px;background:#ececec"></div><div class="a" style="left:237px;top:939px;width:19px;height:21px;background:#f2f2f2"></div><div class="a" style="left:256px;top:939px;width:19px;height:21px;background:#f9f9f9"></div><div class="a" style="left:275px;top:939px;width:19px;height:21px;background:#ffffff"></div><div class="a" style="left:294px;top:939px;width:19px;height:21px;background:#800000"></div><div class="a" style="left:313px;top:939px;width:19px;height:21px;background:#ff0000"></div><div class="a" style="left:332px;top:939px;width:19px;height:21px;background:#808000"></div><div class="a" style="left:351px;top:939px;width:19px;height:21px;background:#ffff00"></div><div class="a" style="left:370px;top:939px;width:19px;height:21px;background:#008000"></div><div class="a" style="left:389px;top:939px;width:19px;height:21px;background:#00ff00"></div><div class="a" style="left:408px;top:939px;width:19px;height:21px;background:#008080"></div><div class="a" style="left:427px;top:939px;width:19px;height:21px;background:#00ffff"></div><div class="a" style="left:446px;top:939px;width:19px;height:21px;background:#000080"></div><div class="a" style="left:465px;top:939px;width:19px;height:21px;background:#0000ff"></div><div class="a" style="left:484px;top:939px;width:19px;height:21px;background:#800080"></div><div class="a" style="left:503px;top:939px;width:19px;height:21px;background:#ff00ff"></div><div class="a" style="left:522px;top:939px;width:19px;height:21px;background:#2b0000"></div><div class="a" style="left:541px;top:939px;width:19px;height:21px;background:#550000"></div><div class="a" style="left:560px;top:939px;width:19px;height:21px;background:#800000"></div><div class="a" style="left:579px;top:939px;width:19px;height:21px;background:#aa0000"></div><div class="a" style="left:598px;top:939px;width:19px;height:21px;background:#d40000"></div><div class="a" style="left:617px;top:939px;width:19px;height:21px;background:#ff0000"></div><div class="a" style="left:636px;top:939px;width:19px;height:21px;background:#ff2a2a"></div><div class="a" style="left:655px;top:939px;width:19px;height:21px;background:#ff5555"></div><div class="a" style="left:674px;top:939px;width:19px;height:21px;background:#ff8080"></div><div class="a" style="left:693px;top:939px;width:19px;height:21px;background:#ffaaaa"></div><div class="a" style="left:712px;top:939px;width:19px;height:21px;background:#ffd5d5"></div><div class="a" style="left:731px;top:939px;width:19px;height:21px;background:#2b1111"></div><div class="a" style="left:750px;top:939px;width:19px;height:21px;background:#501616"></div><div class="a" style="left:769px;top:939px;width:19px;height:21px;background:#782121"></div><div class="a" style="left:788px;top:939px;width:19px;height:21px;background:#a02c2c"></div><div class="a" style="left:807px;top:939px;width:19px;height:21px;background:#c83737"></div><div class="a" style="left:826px;top:939px;width:19px;height:21px;background:#d35f5f"></div><div class="a" style="left:845px;top:939px;width:19px;height:21px;background:#de8787"></div><div class="a" style="left:864px;top:939px;width:19px;height:21px;background:#e9afaf"></div><div class="a" style="left:883px;top:939px;width:19px;height:21px;background:#f4d7d7"></div><div class="a" style="left:902px;top:939px;width:19px;height:21px;background:#241c1c"></div><div class="a" style="left:921px;top:939px;width:19px;height:21px;background:#483737"></div><div class="a" style="left:940px;top:939px;width:19px;height:21px;background:#6c5353"></div><div class="a" style="left:959px;top:939px;width:19px;height:21px;background:#916f6f"></div><div class="a" style="left:978px;top:939px;width:19px;height:21px;background:#ac9393"></div><div class="a" style="left:997px;top:939px;width:19px;height:21px;background:#c8b7b7"></div><div class="a" style="left:1016px;top:939px;width:19px;height:21px;background:#e3dbdb"></div><div class="a" style="left:1035px;top:939px;width:19px;height:21px;background:#2b1100"></div><div class="a" style="left:1054px;top:939px;width:19px;height:21px;background:#552200"></div><div class="a" style="left:1073px;top:939px;width:19px;height:21px;background:#803300"></div><div class="a" style="left:1092px;top:939px;width:19px;height:21px;background:#aa4400"></div><div class="a" style="left:1111px;top:939px;width:19px;height:21px;background:#d45500"></div><div class="a" style="left:1130px;top:939px;width:19px;height:21px;background:#ff6600"></div><div class="a" style="left:1149px;top:939px;width:19px;height:21px;background:#ff7f2a"></div><div class="a" style="left:1168px;top:939px;width:19px;height:21px;background:#ff9955"></div><div class="a" style="left:1187px;top:939px;width:19px;height:21px;background:#ffb380"></div><div class="a" style="left:1206px;top:939px;width:19px;height:21px;background:#ffccaa"></div><div class="a" style="left:1225px;top:939px;width:19px;height:21px;background:#ffe6d5"></div><div class="a" style="left:1244px;top:939px;width:19px;height:21px;background:#28170b"></div><div class="a" style="left:1263px;top:939px;width:19px;height:21px;background:#502d16"></div><div class="a" style="left:1282px;top:939px;width:19px;height:21px;background:#784421"></div><div class="a" style="left:1301px;top:939px;width:19px;height:21px;background:#a05a2c"></div><div class="a" style="left:1320px;top:939px;width:19px;height:21px;background:#c87137"></div><div class="a" style="left:1339px;top:939px;width:19px;height:21px;background:#d38d5f"></div><div class="a" style="left:1358px;top:939px;width:19px;height:21px;background:#deaa87"></div><div class="a" style="left:1377px;top:939px;width:19px;height:21px;background:#e9c6af"></div><div class="a" style="left:9px;top:960px;width:1388px;height:13px;background:#cecece"></div><div class="a" style="left:12px;top:964px;width:228px;height:6px;border-radius:3px;background:#808484"></div><svg style="left:1411px;top:950px" width="6" height="11" viewBox="0 0 6 11"><path d="M5.500 0v11L0 5.500z" fill="#2e3436"/></svg><div class="t" style="left:11px;top:975.5px;font-size:15px;color:#2e3436;letter-spacing:-.1px">Fill:</div><div class="t" style="left:60.5px;top:975.5px;font-size:15px;color:#2e3436;letter-spacing:.5px">N/A</div><div class="t" style="left:11px;top:995.5px;font-size:15px;color:#2e3436;letter-spacing:-.45px">Stroke:</div><div class="t" style="left:60.5px;top:995.5px;font-size:15px;color:#2e3436;letter-spacing:.5px">N/A</div><div class="t" style="left:89px;top:986px;font-size:15px;color:#2e3436;">O:</div><div class="a" style="left:105px;top:973px;width:68px;height:40px;background:#faf9f8;border:1px solid #d9d4d0;border-radius:5px"></div><div class="a" style="left:138px;top:974px;width:1px;height:38px;background:#e4e0dc"></div><div class="a" style="left:155px;top:974px;width:1px;height:38px;background:#e4e0dc"></div><div class="a" style="left:142.5px;top:992.0px;width:9px;height:2px;background:#d3d3d2"></div><div class="a" style="left:159.5px;top:992.0px;width:9px;height:2px;background:#d3d3d2"></div><div class="a" style="left:163.0px;top:988.5px;width:2px;height:9px;background:#d3d3d2"></div><div class="t" style="left:109px;top:985.0px;font-size:15px;color:#a9abab">100</div><div class="a" style="left:199px;top:974px;width:1px;height:39px;background:#dedad6"></div><svg style="left:210px;top:985px" width="17" height="16" viewBox="0 0 16 16"><path d="M.5 9Q8 2.500 15.500 9 8 15 .5 9z" fill="#fff" stroke="#111" stroke-width="1.200"/><circle cx="8" cy="8.800" r="3.200" fill="#111"/><circle cx="7" cy="7.800" r="1" fill="#999"/><path d="M2.500 5.500L1 3M5.200 4L4.500 1.200M8 3.500V.5M10.800 4l.7-2.800M13.500 5.500L15 3" stroke="#111" stroke-width="1.100"/></svg><svg style="left:247px;top:985px" width="16" height="16" viewBox="0 0 16 16"><path d="M3.800 8V5q0-3.600 3.600-3.600 3.200 0 3.600 3" fill="none" stroke="#111" stroke-width="1.500"/><rect x="2.300" y="7.600" width="10.600" height="7.600" rx="1" fill="#f3e7a8" stroke="#111" stroke-width="1.100" transform="rotate(-7 8 11)"/><path d="M7 10.200h2v1.200l-.5 1.800h-1l-.5-1.800z" fill="#111" transform="rotate(-7 8 11)"/></svg><div class="a" style="left:274px;top:973px;width:91px;height:40px;background:linear-gradient(180deg,#f8f7f6,#f0eeec);border:1px solid #cdc7c2;border-radius:5px"></div><div class="t" style="left:287px;top:986px;font-size:13px;color:#2e3436;font-weight:bold;letter-spacing:-.25px">•Layer 1</div><svg style="left:342px;top:991px" width="10" height="6" viewBox="0 0 10 6"><path d="M0 0h10L5 5.500z" fill="#2e3436"/></svg><div class="t" style="left:366px;top:985.5px;font-size:15px;color:#2e3436;letter-spacing:-.06px">No objects selected. Click, Shift+click, Alt+scroll mouse on top of objects, or drag around objects to select.</div><div class="a" style="left:1068px;top:974px;width:1px;height:39px;background:#dedad6"></div><div class="t" style="left:1079px;top:975.5px;font-size:15px;color:#2e3436;">X:</div><div class="t" style="left:1079px;top:995.5px;font-size:15px;color:#2e3436;">Y:</div><div class="t" style="left:1090px;width:61px;text-align:right;top:975.500px;font-size:15px">76.35</div><div class="t" style="left:1090px;width:61px;text-align:right;top:995.500px;font-size:15px">122.46</div><div class="t" style="left:1161px;top:987px;font-size:15px;color:#2e3436;">Z:</div><div class="a" style="left:1183px;top:973px;width:99px;height:40px;background:#ffffff;border:1px solid #cdc7c2;border-radius:5px"></div><div class="a" style="left:1239px;top:974px;width:1px;height:38px;background:#e6e3e0"></div><div class="a" style="left:1259px;top:974px;width:1px;height:38px;background:#e6e3e0"></div><div class="a" style="left:1244.5px;top:992.0px;width:10px;height:2px;background:#2e3436"></div><div class="a" style="left:1265.5px;top:992.0px;width:10px;height:2px;background:#2e3436"></div><div class="a" style="left:1269.5px;top:988.0px;width:2px;height:10px;background:#2e3436"></div><div class="t" style="left:1198px;top:985.0px;font-size:15px;color:#2e3436">70%</div><div class="t" style="left:1293px;top:987px;font-size:15px;color:#2e3436;">R:</div><div class="a" style="left:1315px;top:973px;width:108px;height:40px;background:#ffffff;border:1px solid #cdc7c2;border-radius:5px"></div><div class="a" style="left:1379px;top:974px;width:1px;height:38px;background:#e6e3e0"></div><div class="a" style="left:1400px;top:974px;width:1px;height:38px;background:#e6e3e0"></div><div class="a" style="left:1385.0px;top:992.0px;width:10px;height:2px;background:#2e3436"></div><div class="a" style="left:1406.5px;top:992.0px;width:10px;height:2px;background:#2e3436"></div><div class="a" style="left:1410.5px;top:988.0px;width:2px;height:10px;background:#2e3436"></div><div class="t" style="left:1335px;top:985.0px;font-size:15px;color:#2e3436">0.00°</div></body></html>
